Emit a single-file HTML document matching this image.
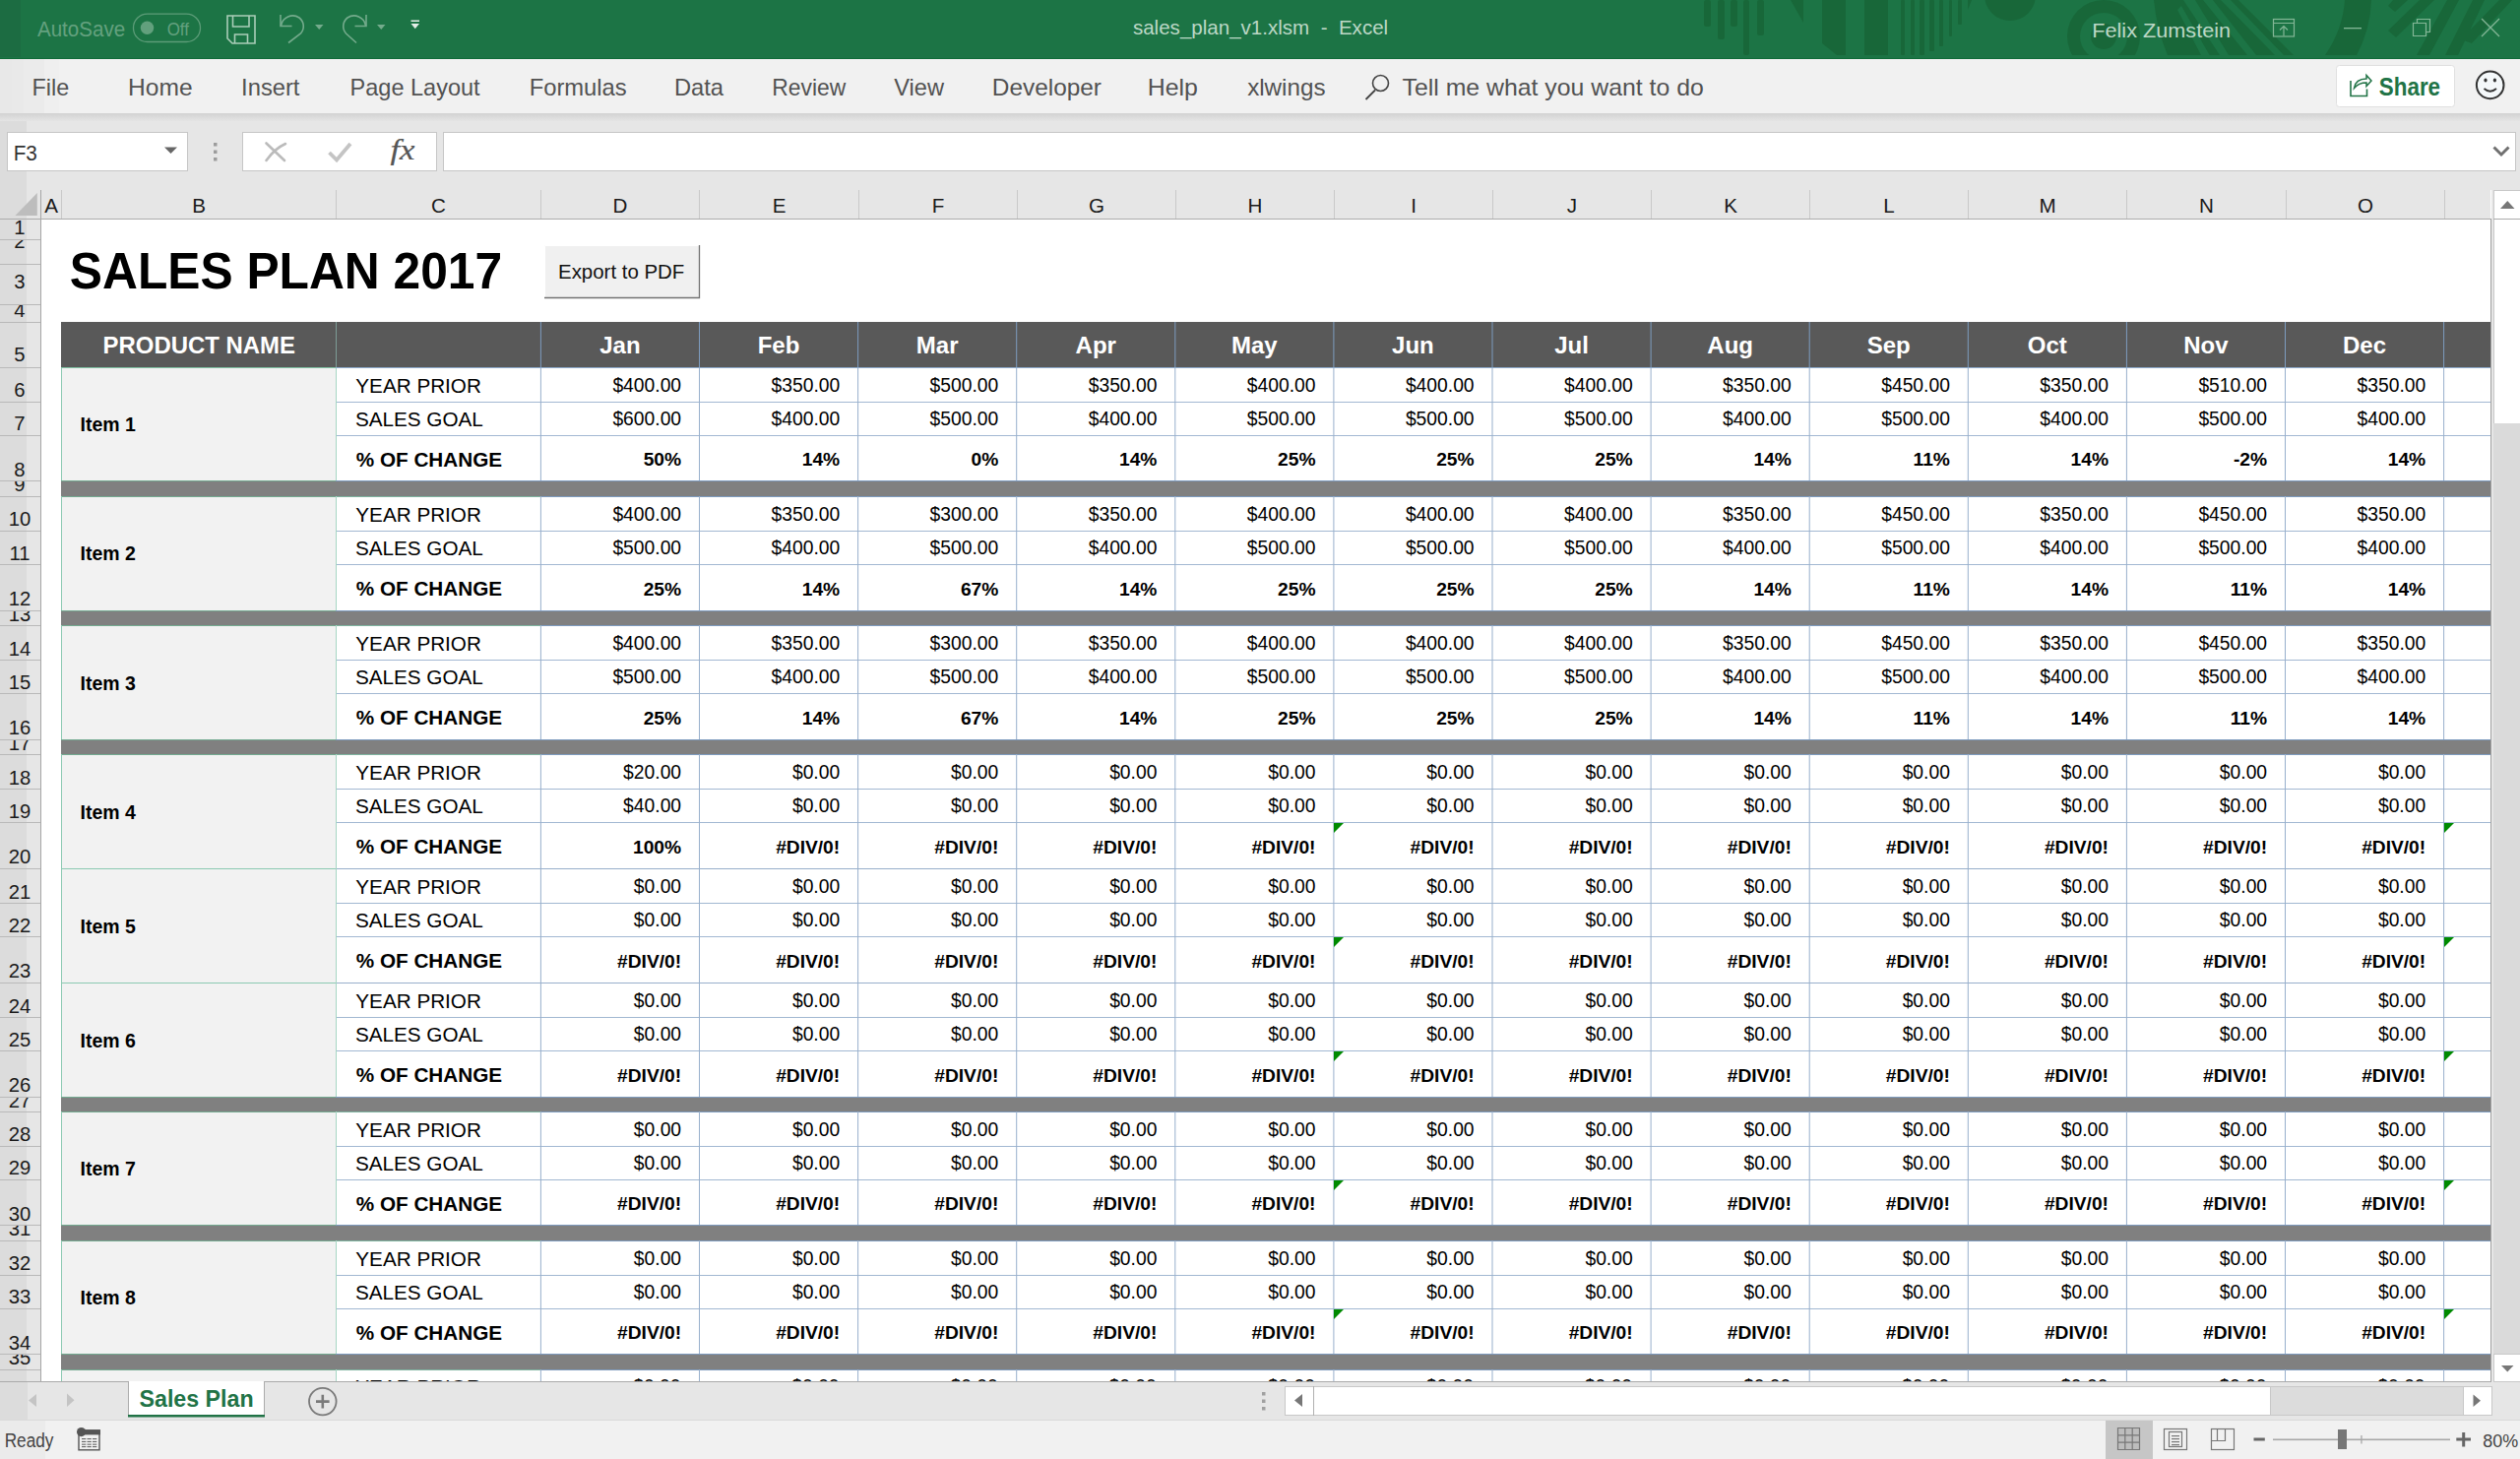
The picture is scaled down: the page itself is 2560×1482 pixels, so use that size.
<!DOCTYPE html>
<html><head><meta charset="utf-8"><title>sales_plan_v1.xlsm - Excel</title>
<style>html,body{margin:0;padding:0;width:2560px;height:1482px;overflow:hidden;background:#fff;font-family:"Liberation Sans",sans-serif}
svg text{white-space:pre}</style></head><body>
<svg width="2560" height="1482" viewBox="0 0 2560 1482" style="display:block"><rect x="0" y="0" width="2560" height="60" fill="#1C7445" />
<rect x="0" y="0" width="21" height="58" fill="#1C6C42" />
<rect x="0" y="59" width="2560" height="1" fill="#0F6A38" />
<g fill="#186739" clip-path="url(#tbclip)"><rect x="1731" y="0" width="7" height="27" rx="2"/><rect x="1745" y="0" width="7" height="40" rx="2"/><rect x="1758" y="0" width="7" height="27" rx="2"/><rect x="1771" y="0" width="6" height="56" rx="2"/><rect x="1785" y="0" width="7" height="36" rx="2"/><path d="M1819 0 L1832 0 L1832 23 Z"/><path d="M1851 0 L1875 0 L1875 56 L1866 56 L1851 44 Z"/><rect x="1894" y="0" width="24" height="56" rx="0"/><rect x="1931" y="0" width="4" height="56" rx="1"/><rect x="1941" y="0" width="4" height="56" rx="1"/><rect x="1950" y="0" width="5" height="56" rx="1"/><rect x="1960" y="0" width="5" height="52" rx="1"/><rect x="1970" y="0" width="4" height="47" rx="1"/><rect x="1980" y="0" width="3" height="37" rx="1"/><rect x="1989" y="0" width="4" height="25" rx="1"/><path d="M1999 0 L2003 0 L1999 10 Z"/><circle cx="2042" cy="-5" r="26"/><circle cx="2137" cy="37" r="37"/><circle cx="2137" cy="37" r="24" fill="#1C7445"/><circle cx="2137" cy="37" r="13"/><path d="M2188 0 L2409 0 Q2408 30 2394 56 L2202 56 Q2191 30 2188 0 Z"/><path fill="#1C7445" d="M2274 0 L2382 0 Q2380 30 2362 56 L2330 56 Z M2256 0 L2266 0 L2320 56 L2311 56 Z M2238 0 L2248 0 L2292 56 L2283 56 Z M2218 0 L2230 0 L2264 56 L2255 56 Z M2212 10 L2216 6 L2244.6 56 L2236 56 Z"/><path d="M2431 0 L2446 0 L2433 12 L2426 6 Z M2458 0 L2473 0 L2434 38 L2426 31 Z M2486 0 L2498 0 L2468 56 L2455 56 Z M2512 0 L2524 0 L2497 56 L2484 56 Z M2539 0 L2552 0 L2511 44 L2500 40 Z"/></g>
<text x="37.96" y="37.00" font-family="Liberation Sans" font-size="22" font-weight="normal" fill="#64A17F" textLength="89.15" lengthAdjust="spacingAndGlyphs" >AutoSave</text>
<rect x="135.5" y="14.2" width="68" height="28.3" rx="14.1" fill="none" stroke="#5C9C78" stroke-width="1.3"/>
<circle cx="149.5" cy="28.3" r="6.7" fill="#62A07D"/>
<text x="169.71" y="35.80" font-family="Liberation Sans" font-size="19" font-weight="normal" fill="#64A17F" textLength="22.27" lengthAdjust="spacingAndGlyphs" >Off</text>
<path d="M231 16 L259 16 L259 44 L236 44 L231 39 Z" fill="none" stroke="#AACDB8" stroke-width="1.6"/>
<path d="M236.5 16 L236.5 27 L253 27 L253 16" fill="none" stroke="#AACDB8" stroke-width="1.6"/>
<path d="M238.5 44 L238.5 35 L251.5 35 L251.5 44" fill="none" stroke="#AACDB8" stroke-width="1.6"/>
<path d="M285 15 L285 26.5 L296.5 26.5" fill="none" stroke="#74AB8C" stroke-width="1.6"/>
<path d="M285.5 26 A12 12 0 0 1 304 18 A11 11 0 0 1 305.5 34 L293 43.5" fill="none" stroke="#74AB8C" stroke-width="1.6"/>
<path d="M320 25 L328.5 25 L324.25 30 Z" fill="#74AB8C"/>
<path d="M372 15 L372 26.5 L360.5 26.5" fill="none" stroke="#74AB8C" stroke-width="1.6"/>
<path d="M371.5 26 A12 12 0 0 0 353 18 A11 11 0 0 0 351.5 34 L362 43.5" fill="none" stroke="#74AB8C" stroke-width="1.6"/>
<path d="M383 25 L391.5 25 L387.25 30 Z" fill="#74AB8C"/>
<rect x="417.5" y="20.5" width="8.5" height="1.5" fill="#E3EEE7"/>
<path d="M417.5 24 L426 24 L421.75 29.2 Z" fill="#E3EEE7"/>
<text x="1150.93" y="35.40" font-family="Liberation Sans" font-size="21" font-weight="normal" fill="#BCD8C6" textLength="259.25" lengthAdjust="spacingAndGlyphs" >sales_plan_v1.xlsm  -  Excel</text>
<text x="2125.22" y="38.00" font-family="Liberation Sans" font-size="21" font-weight="normal" fill="#BCD8C6" textLength="140.88" lengthAdjust="spacingAndGlyphs" >Felix Zumstein</text>
<rect x="2309.5" y="19.5" width="21" height="17.5" fill="none" stroke="#84B797" stroke-width="1.2"/>
<path d="M2309.5 23.5 L2330.5 23.5 M2320 36.5 L2320 27 M2316 30.5 L2320 26.5 L2324 30.5" fill="none" stroke="#84B797" stroke-width="1.2"/>
<rect x="2381" y="28" width="18" height="1.3" fill="#84B797"/>
<path d="M2451.5 23.5 L2464.5 23.5 L2464.5 36.5 L2451.5 36.5 Z M2455.5 23.5 L2455.5 19.5 L2468.5 19.5 L2468.5 32.5 L2464.5 32.5" fill="none" stroke="#84B797" stroke-width="1.2"/>
<path d="M2521 19 L2539 37 M2539 19 L2521 37" fill="none" stroke="#84B797" stroke-width="1.3"/>
<rect x="0" y="60" width="2560" height="55" fill="#F1F1F1" />
<rect x="0" y="60" width="12" height="55" fill="#E8E8E8" />
<rect x="12" y="60" width="12" height="55" fill="#E9E9E9" />
<rect x="24" y="60" width="21" height="55" fill="#EBEBEB" />
<rect x="45" y="60" width="15" height="55" fill="#EFEFEF" />
<text x="32.48" y="96.60" font-family="Liberation Sans" font-size="24" font-weight="normal" fill="#525252" textLength="37.66" lengthAdjust="spacingAndGlyphs" >File</text>
<text x="130.09" y="96.60" font-family="Liberation Sans" font-size="24" font-weight="normal" fill="#525252" textLength="65.51" lengthAdjust="spacingAndGlyphs" >Home</text>
<text x="245.11" y="96.60" font-family="Liberation Sans" font-size="24" font-weight="normal" fill="#525252" textLength="59.36" lengthAdjust="spacingAndGlyphs" >Insert</text>
<text x="355.57" y="96.60" font-family="Liberation Sans" font-size="24" font-weight="normal" fill="#525252" textLength="132.00" lengthAdjust="spacingAndGlyphs" >Page Layout</text>
<text x="537.65" y="96.60" font-family="Liberation Sans" font-size="24" font-weight="normal" fill="#525252" textLength="99.11" lengthAdjust="spacingAndGlyphs" >Formulas</text>
<text x="684.96" y="96.60" font-family="Liberation Sans" font-size="24" font-weight="normal" fill="#525252" textLength="50.04" lengthAdjust="spacingAndGlyphs" >Data</text>
<text x="784.33" y="96.60" font-family="Liberation Sans" font-size="24" font-weight="normal" fill="#525252" textLength="74.92" lengthAdjust="spacingAndGlyphs" >Review</text>
<text x="908.30" y="96.60" font-family="Liberation Sans" font-size="24" font-weight="normal" fill="#525252" textLength="50.75" lengthAdjust="spacingAndGlyphs" >View</text>
<text x="1007.80" y="96.60" font-family="Liberation Sans" font-size="24" font-weight="normal" fill="#525252" textLength="111.21" lengthAdjust="spacingAndGlyphs" >Developer</text>
<text x="1165.76" y="96.60" font-family="Liberation Sans" font-size="24" font-weight="normal" fill="#525252" textLength="51.19" lengthAdjust="spacingAndGlyphs" >Help</text>
<text x="1267.13" y="96.60" font-family="Liberation Sans" font-size="24" font-weight="normal" fill="#525252" textLength="79.45" lengthAdjust="spacingAndGlyphs" >xlwings</text>
<text x="1424.55" y="96.60" font-family="Liberation Sans" font-size="24" font-weight="normal" fill="#525252" textLength="306.19" lengthAdjust="spacingAndGlyphs" >Tell me what you want to do</text>
<circle cx="1402.5" cy="84.5" r="8" fill="none" stroke="#444" stroke-width="1.6"/>
<path d="M1397 91.5 L1387.5 101" stroke="#444" stroke-width="1.8" fill="none"/>
<rect x="2373.5" y="66.5" width="120" height="42" rx="3" fill="#FFFFFF" stroke="#E0E0E0" stroke-width="1"/>
<path d="M2388 82 L2388 97.5 L2404.5 97.5 L2404.5 90.5" fill="none" stroke="#217346" stroke-width="1.6"/>
<path d="M2391.5 89.5 Q2393 80 2404 80 L2404 76.5 L2409 82 L2404 87.5 L2404 84 Q2396 84 2391.5 89.5 Z" fill="none" stroke="#217346" stroke-width="1.5"/>
<text x="2416.86" y="96.50" font-family="Liberation Sans" font-size="25" font-weight="bold" fill="#217346" textLength="62.21" lengthAdjust="spacingAndGlyphs" >Share</text>
<circle cx="2529.7" cy="86.4" r="13.8" fill="#F4F8FA" stroke="#333" stroke-width="2"/>
<ellipse cx="2525" cy="81.5" rx="1.6" ry="2.1" fill="#333"/><ellipse cx="2534.4" cy="81.5" rx="1.6" ry="2.1" fill="#333"/>
<path d="M2523.5 90 Q2529.7 95.5 2536 90" fill="none" stroke="#333" stroke-width="1.8"/>
<defs><linearGradient id="sh" x1="0" y1="0" x2="0" y2="1"><stop offset="0" stop-color="#D2D2D2"/><stop offset="1" stop-color="#E4E4E4"/></linearGradient><clipPath id="tbclip"><rect x="0" y="0" width="2560" height="56"/></clipPath></defs>
<rect x="0" y="115" width="2560" height="8" fill="url(#sh)" />
<rect x="0" y="123" width="2560" height="70" fill="#E6E6E6" />
<rect x="0" y="123" width="27" height="70" fill="#DCDCDC" />
<rect x="7.5" y="134.5" width="183" height="39" fill="#FFF" stroke="#C6C6C6"/>
<text x="13.70" y="162.60" font-family="Liberation Sans" font-size="22" font-weight="normal" fill="#333" textLength="24.21" lengthAdjust="spacingAndGlyphs" >F3</text>
<path d="M167 149.5 L180 149.5 L173.5 156 Z" fill="#666"/>
<rect x="217" y="145" width="3.5" height="3.5" fill="#9C9C9C" />
<rect x="217" y="152.5" width="3.5" height="3.5" fill="#9C9C9C" />
<rect x="217" y="160" width="3.5" height="3.5" fill="#9C9C9C" />
<rect x="246.5" y="134.5" width="197" height="39" fill="#FFF" stroke="#C6C6C6"/>
<path d="M270.5 145.5 L289 163 M290 146 Q279 151 270.5 163" stroke="#BBBBBB" stroke-width="2.6" stroke-linecap="round" fill="none"/>
<path d="M334.5 155 L342 162.5 L356 146" fill="none" stroke="#C4C4C4" stroke-width="3.8"/>
<text x="396.5" y="161.5" font-family="Liberation Serif" font-style="italic" font-size="29" fill="#555" stroke="#555" stroke-width="0.2" textLength="25" lengthAdjust="spacingAndGlyphs">fx</text>
<rect x="450.5" y="134.5" width="2105" height="39" fill="#FFF" stroke="#C6C6C6"/>
<path d="M2533.5 149.5 L2541 157 L2548.5 149.5" fill="none" stroke="#707070" stroke-width="3"/>
<rect x="0" y="193" width="2530" height="30" fill="#E6E6E6" />
<rect x="0" y="193" width="27" height="30" fill="#DCDCDC" />
<path d="M37.8 196 L37.8 219 L15.4 219 Z" fill="#BDBDBD"/>
<text x="52.00" y="215.80" font-family="Liberation Sans" font-size="20.6" font-weight="normal" fill="#1A1A1A" text-anchor="middle" >A</text>
<rect x="62" y="193" width="1" height="29" fill="#C9C9C9" />
<text x="202.00" y="215.80" font-family="Liberation Sans" font-size="20.6" font-weight="normal" fill="#1A1A1A" text-anchor="middle" >B</text>
<rect x="341" y="193" width="1" height="29" fill="#C9C9C9" />
<text x="445.50" y="215.80" font-family="Liberation Sans" font-size="20.6" font-weight="normal" fill="#1A1A1A" text-anchor="middle" >C</text>
<rect x="549" y="193" width="1" height="29" fill="#C9C9C9" />
<text x="630.00" y="215.80" font-family="Liberation Sans" font-size="20.6" font-weight="normal" fill="#1A1A1A" text-anchor="middle" >D</text>
<rect x="710" y="193" width="1" height="29" fill="#C9C9C9" />
<text x="791.50" y="215.80" font-family="Liberation Sans" font-size="20.6" font-weight="normal" fill="#1A1A1A" text-anchor="middle" >E</text>
<rect x="872" y="193" width="1" height="29" fill="#C9C9C9" />
<text x="953.00" y="215.80" font-family="Liberation Sans" font-size="20.6" font-weight="normal" fill="#1A1A1A" text-anchor="middle" >F</text>
<rect x="1033" y="193" width="1" height="29" fill="#C9C9C9" />
<text x="1114.00" y="215.80" font-family="Liberation Sans" font-size="20.6" font-weight="normal" fill="#1A1A1A" text-anchor="middle" >G</text>
<rect x="1194" y="193" width="1" height="29" fill="#C9C9C9" />
<text x="1275.00" y="215.80" font-family="Liberation Sans" font-size="20.6" font-weight="normal" fill="#1A1A1A" text-anchor="middle" >H</text>
<rect x="1355" y="193" width="1" height="29" fill="#C9C9C9" />
<text x="1436.00" y="215.80" font-family="Liberation Sans" font-size="20.6" font-weight="normal" fill="#1A1A1A" text-anchor="middle" >I</text>
<rect x="1516" y="193" width="1" height="29" fill="#C9C9C9" />
<text x="1597.00" y="215.80" font-family="Liberation Sans" font-size="20.6" font-weight="normal" fill="#1A1A1A" text-anchor="middle" >J</text>
<rect x="1677" y="193" width="1" height="29" fill="#C9C9C9" />
<text x="1758.00" y="215.80" font-family="Liberation Sans" font-size="20.6" font-weight="normal" fill="#1A1A1A" text-anchor="middle" >K</text>
<rect x="1838" y="193" width="1" height="29" fill="#C9C9C9" />
<text x="1919.00" y="215.80" font-family="Liberation Sans" font-size="20.6" font-weight="normal" fill="#1A1A1A" text-anchor="middle" >L</text>
<rect x="1999" y="193" width="1" height="29" fill="#C9C9C9" />
<text x="2080.00" y="215.80" font-family="Liberation Sans" font-size="20.6" font-weight="normal" fill="#1A1A1A" text-anchor="middle" >M</text>
<rect x="2160" y="193" width="1" height="29" fill="#C9C9C9" />
<text x="2241.50" y="215.80" font-family="Liberation Sans" font-size="20.6" font-weight="normal" fill="#1A1A1A" text-anchor="middle" >N</text>
<rect x="2322" y="193" width="1" height="29" fill="#C9C9C9" />
<text x="2403.00" y="215.80" font-family="Liberation Sans" font-size="20.6" font-weight="normal" fill="#1A1A1A" text-anchor="middle" >O</text>
<rect x="2483" y="193" width="1" height="29" fill="#C9C9C9" />
<rect x="41" y="193" width="1" height="1210" fill="#A6A6A6" />
<rect x="0" y="222" width="2530" height="1" fill="#ABABAB" />
<rect x="0" y="223" width="41" height="1180" fill="#E6E6E6" />
<rect x="0" y="223" width="27" height="1180" fill="#DCDCDC" />
<defs>
<clipPath id="rc1"><rect x="0" y="223" width="41" height="21"/></clipPath>
<clipPath id="rc2"><rect x="0" y="244" width="41" height="25"/></clipPath>
<clipPath id="rc3"><rect x="0" y="269" width="41" height="41"/></clipPath>
<clipPath id="rc4"><rect x="0" y="310" width="41" height="18"/></clipPath>
<clipPath id="rc5"><rect x="0" y="328" width="41" height="46"/></clipPath>
<clipPath id="rc6"><rect x="0" y="374" width="41" height="35"/></clipPath>
<clipPath id="rc7"><rect x="0" y="409" width="41" height="34"/></clipPath>
<clipPath id="rc8"><rect x="0" y="443" width="41" height="46"/></clipPath>
<clipPath id="rc9"><rect x="0" y="489" width="41" height="16"/></clipPath>
<clipPath id="rc10"><rect x="0" y="505" width="41" height="35"/></clipPath>
<clipPath id="rc11"><rect x="0" y="540" width="41" height="34"/></clipPath>
<clipPath id="rc12"><rect x="0" y="574" width="41" height="47"/></clipPath>
<clipPath id="rc13"><rect x="0" y="621" width="41" height="15"/></clipPath>
<clipPath id="rc14"><rect x="0" y="636" width="41" height="35"/></clipPath>
<clipPath id="rc15"><rect x="0" y="671" width="41" height="34"/></clipPath>
<clipPath id="rc16"><rect x="0" y="705" width="41" height="47"/></clipPath>
<clipPath id="rc17"><rect x="0" y="752" width="41" height="15"/></clipPath>
<clipPath id="rc18"><rect x="0" y="767" width="41" height="35"/></clipPath>
<clipPath id="rc19"><rect x="0" y="802" width="41" height="34"/></clipPath>
<clipPath id="rc20"><rect x="0" y="836" width="41" height="47"/></clipPath>
<clipPath id="rc21"><rect x="0" y="883" width="41" height="35"/></clipPath>
<clipPath id="rc22"><rect x="0" y="918" width="41" height="34"/></clipPath>
<clipPath id="rc23"><rect x="0" y="952" width="41" height="47"/></clipPath>
<clipPath id="rc24"><rect x="0" y="999" width="41" height="35"/></clipPath>
<clipPath id="rc25"><rect x="0" y="1034" width="41" height="34"/></clipPath>
<clipPath id="rc26"><rect x="0" y="1068" width="41" height="47"/></clipPath>
<clipPath id="rc27"><rect x="0" y="1115" width="41" height="15"/></clipPath>
<clipPath id="rc28"><rect x="0" y="1130" width="41" height="35"/></clipPath>
<clipPath id="rc29"><rect x="0" y="1165" width="41" height="34"/></clipPath>
<clipPath id="rc30"><rect x="0" y="1199" width="41" height="46"/></clipPath>
<clipPath id="rc31"><rect x="0" y="1245" width="41" height="16"/></clipPath>
<clipPath id="rc32"><rect x="0" y="1261" width="41" height="35"/></clipPath>
<clipPath id="rc33"><rect x="0" y="1296" width="41" height="34"/></clipPath>
<clipPath id="rc34"><rect x="0" y="1330" width="41" height="46"/></clipPath>
<clipPath id="rc35"><rect x="0" y="1376" width="41" height="16"/></clipPath>
<clipPath id="rc36"><rect x="0" y="1392" width="41" height="35"/></clipPath>
<clipPath id="rc37"><rect x="0" y="1427" width="41" height="34"/></clipPath>
<clipPath id="rc38"><rect x="0" y="1461" width="41" height="47"/></clipPath>
<clipPath id="rc39"><rect x="0" y="1508" width="41" height="15"/></clipPath>
</defs>
<rect x="0" y="243" width="41" height="1" fill="#B9B9B9" />
<g clip-path="url(#rc1)">
<text x="20.00" y="238.30" font-family="Liberation Sans" font-size="20.3" font-weight="normal" fill="#1A1A1A" text-anchor="middle" >1</text>
</g>
<rect x="0" y="268" width="41" height="1" fill="#B9B9B9" />
<g clip-path="url(#rc2)">
<text x="20.00" y="251.70" font-family="Liberation Sans" font-size="20.3" font-weight="normal" fill="#1A1A1A" text-anchor="middle" >2</text>
</g>
<rect x="0" y="309" width="41" height="1" fill="#B9B9B9" />
<g clip-path="url(#rc3)">
<text x="20.00" y="292.90" font-family="Liberation Sans" font-size="20.3" font-weight="normal" fill="#1A1A1A" text-anchor="middle" >3</text>
</g>
<rect x="0" y="327" width="41" height="1" fill="#B9B9B9" />
<g clip-path="url(#rc4)">
<text x="20.00" y="322.10" font-family="Liberation Sans" font-size="20.3" font-weight="normal" fill="#1A1A1A" text-anchor="middle" >4</text>
</g>
<rect x="0" y="373" width="41" height="1" fill="#B9B9B9" />
<g clip-path="url(#rc5)">
<text x="20.00" y="366.90" font-family="Liberation Sans" font-size="20.3" font-weight="normal" fill="#1A1A1A" text-anchor="middle" >5</text>
</g>
<rect x="0" y="408" width="41" height="1" fill="#B9B9B9" />
<g clip-path="url(#rc6)">
<text x="20.00" y="403.20" font-family="Liberation Sans" font-size="20.3" font-weight="normal" fill="#1A1A1A" text-anchor="middle" >6</text>
</g>
<rect x="0" y="442" width="41" height="1" fill="#B9B9B9" />
<g clip-path="url(#rc7)">
<text x="20.00" y="437.40" font-family="Liberation Sans" font-size="20.3" font-weight="normal" fill="#1A1A1A" text-anchor="middle" >7</text>
</g>
<rect x="0" y="488" width="41" height="1" fill="#B9B9B9" />
<g clip-path="url(#rc8)">
<text x="20.00" y="483.90" font-family="Liberation Sans" font-size="20.3" font-weight="normal" fill="#1A1A1A" text-anchor="middle" >8</text>
</g>
<rect x="0" y="504" width="41" height="1" fill="#B9B9B9" />
<g clip-path="url(#rc9)">
<text x="20.00" y="499.40" font-family="Liberation Sans" font-size="20.3" font-weight="normal" fill="#1A1A1A" text-anchor="middle" >9</text>
</g>
<rect x="0" y="539" width="41" height="1" fill="#B9B9B9" />
<g clip-path="url(#rc10)">
<text x="20.00" y="534.40" font-family="Liberation Sans" font-size="20.3" font-weight="normal" fill="#1A1A1A" text-anchor="middle" >10</text>
</g>
<rect x="0" y="573" width="41" height="1" fill="#B9B9B9" />
<g clip-path="url(#rc11)">
<text x="20.00" y="568.60" font-family="Liberation Sans" font-size="20.3" font-weight="normal" fill="#1A1A1A" text-anchor="middle" >11</text>
</g>
<rect x="0" y="620" width="41" height="1" fill="#B9B9B9" />
<g clip-path="url(#rc12)">
<text x="20.00" y="615.10" font-family="Liberation Sans" font-size="20.3" font-weight="normal" fill="#1A1A1A" text-anchor="middle" >12</text>
</g>
<rect x="0" y="635" width="41" height="1" fill="#B9B9B9" />
<g clip-path="url(#rc13)">
<text x="20.00" y="630.60" font-family="Liberation Sans" font-size="20.3" font-weight="normal" fill="#1A1A1A" text-anchor="middle" >13</text>
</g>
<rect x="0" y="670" width="41" height="1" fill="#B9B9B9" />
<g clip-path="url(#rc14)">
<text x="20.00" y="665.60" font-family="Liberation Sans" font-size="20.3" font-weight="normal" fill="#1A1A1A" text-anchor="middle" >14</text>
</g>
<rect x="0" y="704" width="41" height="1" fill="#B9B9B9" />
<g clip-path="url(#rc15)">
<text x="20.00" y="699.80" font-family="Liberation Sans" font-size="20.3" font-weight="normal" fill="#1A1A1A" text-anchor="middle" >15</text>
</g>
<rect x="0" y="751" width="41" height="1" fill="#B9B9B9" />
<g clip-path="url(#rc16)">
<text x="20.00" y="746.30" font-family="Liberation Sans" font-size="20.3" font-weight="normal" fill="#1A1A1A" text-anchor="middle" >16</text>
</g>
<rect x="0" y="766" width="41" height="1" fill="#B9B9B9" />
<g clip-path="url(#rc17)">
<text x="20.00" y="761.80" font-family="Liberation Sans" font-size="20.3" font-weight="normal" fill="#1A1A1A" text-anchor="middle" >17</text>
</g>
<rect x="0" y="801" width="41" height="1" fill="#B9B9B9" />
<g clip-path="url(#rc18)">
<text x="20.00" y="796.70" font-family="Liberation Sans" font-size="20.3" font-weight="normal" fill="#1A1A1A" text-anchor="middle" >18</text>
</g>
<rect x="0" y="835" width="41" height="1" fill="#B9B9B9" />
<g clip-path="url(#rc19)">
<text x="20.00" y="830.90" font-family="Liberation Sans" font-size="20.3" font-weight="normal" fill="#1A1A1A" text-anchor="middle" >19</text>
</g>
<rect x="0" y="882" width="41" height="1" fill="#B9B9B9" />
<g clip-path="url(#rc20)">
<text x="20.00" y="877.40" font-family="Liberation Sans" font-size="20.3" font-weight="normal" fill="#1A1A1A" text-anchor="middle" >20</text>
</g>
<rect x="0" y="917" width="41" height="1" fill="#B9B9B9" />
<g clip-path="url(#rc21)">
<text x="20.00" y="912.60" font-family="Liberation Sans" font-size="20.3" font-weight="normal" fill="#1A1A1A" text-anchor="middle" >21</text>
</g>
<rect x="0" y="951" width="41" height="1" fill="#B9B9B9" />
<g clip-path="url(#rc22)">
<text x="20.00" y="946.80" font-family="Liberation Sans" font-size="20.3" font-weight="normal" fill="#1A1A1A" text-anchor="middle" >22</text>
</g>
<rect x="0" y="998" width="41" height="1" fill="#B9B9B9" />
<g clip-path="url(#rc23)">
<text x="20.00" y="993.30" font-family="Liberation Sans" font-size="20.3" font-weight="normal" fill="#1A1A1A" text-anchor="middle" >23</text>
</g>
<rect x="0" y="1033" width="41" height="1" fill="#B9B9B9" />
<g clip-path="url(#rc24)">
<text x="20.00" y="1028.50" font-family="Liberation Sans" font-size="20.3" font-weight="normal" fill="#1A1A1A" text-anchor="middle" >24</text>
</g>
<rect x="0" y="1067" width="41" height="1" fill="#B9B9B9" />
<g clip-path="url(#rc25)">
<text x="20.00" y="1062.70" font-family="Liberation Sans" font-size="20.3" font-weight="normal" fill="#1A1A1A" text-anchor="middle" >25</text>
</g>
<rect x="0" y="1114" width="41" height="1" fill="#B9B9B9" />
<g clip-path="url(#rc26)">
<text x="20.00" y="1109.20" font-family="Liberation Sans" font-size="20.3" font-weight="normal" fill="#1A1A1A" text-anchor="middle" >26</text>
</g>
<rect x="0" y="1129" width="41" height="1" fill="#B9B9B9" />
<g clip-path="url(#rc27)">
<text x="20.00" y="1124.70" font-family="Liberation Sans" font-size="20.3" font-weight="normal" fill="#1A1A1A" text-anchor="middle" >27</text>
</g>
<rect x="0" y="1164" width="41" height="1" fill="#B9B9B9" />
<g clip-path="url(#rc28)">
<text x="20.00" y="1159.20" font-family="Liberation Sans" font-size="20.3" font-weight="normal" fill="#1A1A1A" text-anchor="middle" >28</text>
</g>
<rect x="0" y="1198" width="41" height="1" fill="#B9B9B9" />
<g clip-path="url(#rc29)">
<text x="20.00" y="1193.40" font-family="Liberation Sans" font-size="20.3" font-weight="normal" fill="#1A1A1A" text-anchor="middle" >29</text>
</g>
<rect x="0" y="1244" width="41" height="1" fill="#B9B9B9" />
<g clip-path="url(#rc30)">
<text x="20.00" y="1239.90" font-family="Liberation Sans" font-size="20.3" font-weight="normal" fill="#1A1A1A" text-anchor="middle" >30</text>
</g>
<rect x="0" y="1260" width="41" height="1" fill="#B9B9B9" />
<g clip-path="url(#rc31)">
<text x="20.00" y="1255.40" font-family="Liberation Sans" font-size="20.3" font-weight="normal" fill="#1A1A1A" text-anchor="middle" >31</text>
</g>
<rect x="0" y="1295" width="41" height="1" fill="#B9B9B9" />
<g clip-path="url(#rc32)">
<text x="20.00" y="1290.20" font-family="Liberation Sans" font-size="20.3" font-weight="normal" fill="#1A1A1A" text-anchor="middle" >32</text>
</g>
<rect x="0" y="1329" width="41" height="1" fill="#B9B9B9" />
<g clip-path="url(#rc33)">
<text x="20.00" y="1324.40" font-family="Liberation Sans" font-size="20.3" font-weight="normal" fill="#1A1A1A" text-anchor="middle" >33</text>
</g>
<rect x="0" y="1375" width="41" height="1" fill="#B9B9B9" />
<g clip-path="url(#rc34)">
<text x="20.00" y="1370.90" font-family="Liberation Sans" font-size="20.3" font-weight="normal" fill="#1A1A1A" text-anchor="middle" >34</text>
</g>
<rect x="0" y="1391" width="41" height="1" fill="#B9B9B9" />
<g clip-path="url(#rc35)">
<text x="20.00" y="1386.40" font-family="Liberation Sans" font-size="20.3" font-weight="normal" fill="#1A1A1A" text-anchor="middle" >35</text>
</g>
<g clip-path="url(#rc36)">
<text x="20.00" y="1421.40" font-family="Liberation Sans" font-size="20.3" font-weight="normal" fill="#1A1A1A" text-anchor="middle" >36</text>
</g>
<g clip-path="url(#rc37)">
<text x="20.00" y="1455.60" font-family="Liberation Sans" font-size="20.3" font-weight="normal" fill="#1A1A1A" text-anchor="middle" >37</text>
</g>
<g clip-path="url(#rc38)">
<text x="20.00" y="1502.10" font-family="Liberation Sans" font-size="20.3" font-weight="normal" fill="#1A1A1A" text-anchor="middle" >38</text>
</g>
<g clip-path="url(#rc39)">
<text x="20.00" y="1517.60" font-family="Liberation Sans" font-size="20.3" font-weight="normal" fill="#1A1A1A" text-anchor="middle" >39</text>
</g>
<rect x="42" y="223" width="2488" height="1180" fill="#FFFFFF" />
<text x="70.87" y="293.20" font-family="Liberation Sans" font-size="52" font-weight="bold" fill="#000" textLength="439.22" lengthAdjust="spacingAndGlyphs" >SALES PLAN 2017</text>
<rect x="553" y="249" width="158" height="54" fill="#F0F0F0"/>
<path d="M553.5 302.5 L553.5 249.5 L710.5 249.5" fill="none" stroke="#FFFFFF" stroke-width="1"/>
<path d="M553 302.5 L710.5 302.5 L710.5 249" fill="none" stroke="#727272" stroke-width="1.3"/>
<text x="567.02" y="283.00" font-family="Liberation Sans" font-size="21" font-weight="normal" fill="#111" textLength="128.29" lengthAdjust="spacingAndGlyphs" >Export to PDF</text>
<rect x="62" y="327" width="2468" height="46" fill="#595959" />
<text x="104.60" y="359.20" font-family="Liberation Sans" font-size="24" font-weight="bold" fill="#FFFFFF" textLength="195.33" lengthAdjust="spacingAndGlyphs" >PRODUCT NAME</text>
<text x="629.95" y="359.20" font-family="Liberation Sans" font-size="24" font-weight="bold" fill="#FFFFFF" text-anchor="middle" >Jan</text>
<text x="791.05" y="359.20" font-family="Liberation Sans" font-size="24" font-weight="bold" fill="#FFFFFF" text-anchor="middle" >Feb</text>
<text x="952.15" y="359.20" font-family="Liberation Sans" font-size="24" font-weight="bold" fill="#FFFFFF" text-anchor="middle" >Mar</text>
<text x="1113.25" y="359.20" font-family="Liberation Sans" font-size="24" font-weight="bold" fill="#FFFFFF" text-anchor="middle" >Apr</text>
<text x="1274.35" y="359.20" font-family="Liberation Sans" font-size="24" font-weight="bold" fill="#FFFFFF" text-anchor="middle" >May</text>
<text x="1435.45" y="359.20" font-family="Liberation Sans" font-size="24" font-weight="bold" fill="#FFFFFF" text-anchor="middle" >Jun</text>
<text x="1596.55" y="359.20" font-family="Liberation Sans" font-size="24" font-weight="bold" fill="#FFFFFF" text-anchor="middle" >Jul</text>
<text x="1757.65" y="359.20" font-family="Liberation Sans" font-size="24" font-weight="bold" fill="#FFFFFF" text-anchor="middle" >Aug</text>
<text x="1918.75" y="359.20" font-family="Liberation Sans" font-size="24" font-weight="bold" fill="#FFFFFF" text-anchor="middle" >Sep</text>
<text x="2079.85" y="359.20" font-family="Liberation Sans" font-size="24" font-weight="bold" fill="#FFFFFF" text-anchor="middle" >Oct</text>
<text x="2240.95" y="359.20" font-family="Liberation Sans" font-size="24" font-weight="bold" fill="#FFFFFF" text-anchor="middle" >Nov</text>
<text x="2402.05" y="359.20" font-family="Liberation Sans" font-size="24" font-weight="bold" fill="#FFFFFF" text-anchor="middle" >Dec</text>
<rect x="341" y="327" width="1" height="46" fill="#7C9C96" />
<rect x="548.9" y="327" width="1" height="46" fill="#7D9CBF" />
<rect x="710" y="327" width="1" height="46" fill="#7D9CBF" />
<rect x="871.1" y="327" width="1" height="46" fill="#7D9CBF" />
<rect x="1032.2" y="327" width="1" height="46" fill="#7D9CBF" />
<rect x="1193.3" y="327" width="1" height="46" fill="#7D9CBF" />
<rect x="1354.4" y="327" width="1" height="46" fill="#7D9CBF" />
<rect x="1515.5" y="327" width="1" height="46" fill="#7D9CBF" />
<rect x="1676.6" y="327" width="1" height="46" fill="#7D9CBF" />
<rect x="1837.7" y="327" width="1" height="46" fill="#7D9CBF" />
<rect x="1998.8" y="327" width="1" height="46" fill="#7D9CBF" />
<rect x="2159.9" y="327" width="1" height="46" fill="#7D9CBF" />
<rect x="2321" y="327" width="1" height="46" fill="#7D9CBF" />
<rect x="2482.1" y="327" width="1" height="46" fill="#7D9CBF" />
<g clip-path="url(#gridclip)">
<defs><clipPath id="gridclip"><rect x="42" y="223" width="2488" height="1180"/></clipPath></defs>
<rect x="63" y="374" width="278" height="115" fill="#F2F2F2" />
<rect x="341" y="408" width="2189" height="1" fill="#A2B8D2" />
<rect x="341" y="442" width="2189" height="1" fill="#A2B8D2" />
<rect x="62" y="373" width="1" height="116" fill="#8CC9B2" />
<rect x="341" y="373" width="1" height="116" fill="#A6D6C4" />
<rect x="548.9" y="373" width="1" height="116" fill="#98B0CC" />
<rect x="710" y="373" width="1" height="116" fill="#98B0CC" />
<rect x="871.1" y="373" width="1" height="116" fill="#98B0CC" />
<rect x="1032.2" y="373" width="1" height="116" fill="#98B0CC" />
<rect x="1193.3" y="373" width="1" height="116" fill="#98B0CC" />
<rect x="1354.4" y="373" width="1" height="116" fill="#98B0CC" />
<rect x="1515.5" y="373" width="1" height="116" fill="#98B0CC" />
<rect x="1676.6" y="373" width="1" height="116" fill="#98B0CC" />
<rect x="1837.7" y="373" width="1" height="116" fill="#98B0CC" />
<rect x="1998.8" y="373" width="1" height="116" fill="#98B0CC" />
<rect x="2159.9" y="373" width="1" height="116" fill="#98B0CC" />
<rect x="2321" y="373" width="1" height="116" fill="#98B0CC" />
<rect x="2482.1" y="373" width="1" height="116" fill="#98B0CC" />
<rect x="62" y="373" width="279" height="1" fill="#7FC2A3" />
<rect x="341" y="373" width="2189" height="1" fill="#8DAACC" />
<rect x="62" y="489" width="2468" height="15" fill="#808080" />
<rect x="62" y="488" width="279" height="1" fill="#74AA91" />
<rect x="341" y="488" width="2189" height="1" fill="#7E9BBE" />
<rect x="62" y="504" width="279" height="1" fill="#74AA91" />
<rect x="341" y="504" width="208" height="1" fill="#7FB4A0" />
<rect x="549" y="504" width="1981" height="1" fill="#7E9BBE" />
<text x="81.50" y="438.20" font-family="Liberation Sans" font-size="19.5" font-weight="bold" fill="#000" text-anchor="start" >Item 1</text>
<text x="361.30" y="398.50" font-family="Liberation Sans" font-size="20.7" font-weight="normal" fill="#000" text-anchor="start" >YEAR PRIOR</text>
<text x="360.90" y="432.80" font-family="Liberation Sans" font-size="20.7" font-weight="normal" fill="#000" text-anchor="start" >SALES GOAL</text>
<text x="361.80" y="473.70" font-family="Liberation Sans" font-size="20.7" font-weight="bold" fill="#000" text-anchor="start" >% OF CHANGE</text>
<text x="692.10" y="397.60" font-family="Liberation Sans" font-size="19.3" font-weight="normal" fill="#000" text-anchor="end" >$400.00</text>
<text x="692.10" y="431.70" font-family="Liberation Sans" font-size="19.3" font-weight="normal" fill="#000" text-anchor="end" >$600.00</text>
<text x="692.10" y="473.40" font-family="Liberation Sans" font-size="19.2" font-weight="bold" fill="#000" text-anchor="end" >50%</text>
<text x="853.20" y="397.60" font-family="Liberation Sans" font-size="19.3" font-weight="normal" fill="#000" text-anchor="end" >$350.00</text>
<text x="853.20" y="431.70" font-family="Liberation Sans" font-size="19.3" font-weight="normal" fill="#000" text-anchor="end" >$400.00</text>
<text x="853.20" y="473.40" font-family="Liberation Sans" font-size="19.2" font-weight="bold" fill="#000" text-anchor="end" >14%</text>
<text x="1014.30" y="397.60" font-family="Liberation Sans" font-size="19.3" font-weight="normal" fill="#000" text-anchor="end" >$500.00</text>
<text x="1014.30" y="431.70" font-family="Liberation Sans" font-size="19.3" font-weight="normal" fill="#000" text-anchor="end" >$500.00</text>
<text x="1014.30" y="473.40" font-family="Liberation Sans" font-size="19.2" font-weight="bold" fill="#000" text-anchor="end" >0%</text>
<text x="1175.40" y="397.60" font-family="Liberation Sans" font-size="19.3" font-weight="normal" fill="#000" text-anchor="end" >$350.00</text>
<text x="1175.40" y="431.70" font-family="Liberation Sans" font-size="19.3" font-weight="normal" fill="#000" text-anchor="end" >$400.00</text>
<text x="1175.40" y="473.40" font-family="Liberation Sans" font-size="19.2" font-weight="bold" fill="#000" text-anchor="end" >14%</text>
<text x="1336.50" y="397.60" font-family="Liberation Sans" font-size="19.3" font-weight="normal" fill="#000" text-anchor="end" >$400.00</text>
<text x="1336.50" y="431.70" font-family="Liberation Sans" font-size="19.3" font-weight="normal" fill="#000" text-anchor="end" >$500.00</text>
<text x="1336.50" y="473.40" font-family="Liberation Sans" font-size="19.2" font-weight="bold" fill="#000" text-anchor="end" >25%</text>
<text x="1497.60" y="397.60" font-family="Liberation Sans" font-size="19.3" font-weight="normal" fill="#000" text-anchor="end" >$400.00</text>
<text x="1497.60" y="431.70" font-family="Liberation Sans" font-size="19.3" font-weight="normal" fill="#000" text-anchor="end" >$500.00</text>
<text x="1497.60" y="473.40" font-family="Liberation Sans" font-size="19.2" font-weight="bold" fill="#000" text-anchor="end" >25%</text>
<text x="1658.70" y="397.60" font-family="Liberation Sans" font-size="19.3" font-weight="normal" fill="#000" text-anchor="end" >$400.00</text>
<text x="1658.70" y="431.70" font-family="Liberation Sans" font-size="19.3" font-weight="normal" fill="#000" text-anchor="end" >$500.00</text>
<text x="1658.70" y="473.40" font-family="Liberation Sans" font-size="19.2" font-weight="bold" fill="#000" text-anchor="end" >25%</text>
<text x="1819.80" y="397.60" font-family="Liberation Sans" font-size="19.3" font-weight="normal" fill="#000" text-anchor="end" >$350.00</text>
<text x="1819.80" y="431.70" font-family="Liberation Sans" font-size="19.3" font-weight="normal" fill="#000" text-anchor="end" >$400.00</text>
<text x="1819.80" y="473.40" font-family="Liberation Sans" font-size="19.2" font-weight="bold" fill="#000" text-anchor="end" >14%</text>
<text x="1980.90" y="397.60" font-family="Liberation Sans" font-size="19.3" font-weight="normal" fill="#000" text-anchor="end" >$450.00</text>
<text x="1980.90" y="431.70" font-family="Liberation Sans" font-size="19.3" font-weight="normal" fill="#000" text-anchor="end" >$500.00</text>
<text x="1980.90" y="473.40" font-family="Liberation Sans" font-size="19.2" font-weight="bold" fill="#000" text-anchor="end" >11%</text>
<text x="2142.00" y="397.60" font-family="Liberation Sans" font-size="19.3" font-weight="normal" fill="#000" text-anchor="end" >$350.00</text>
<text x="2142.00" y="431.70" font-family="Liberation Sans" font-size="19.3" font-weight="normal" fill="#000" text-anchor="end" >$400.00</text>
<text x="2142.00" y="473.40" font-family="Liberation Sans" font-size="19.2" font-weight="bold" fill="#000" text-anchor="end" >14%</text>
<text x="2303.10" y="397.60" font-family="Liberation Sans" font-size="19.3" font-weight="normal" fill="#000" text-anchor="end" >$510.00</text>
<text x="2303.10" y="431.70" font-family="Liberation Sans" font-size="19.3" font-weight="normal" fill="#000" text-anchor="end" >$500.00</text>
<text x="2303.10" y="473.40" font-family="Liberation Sans" font-size="19.2" font-weight="bold" fill="#000" text-anchor="end" >-2%</text>
<text x="2464.20" y="397.60" font-family="Liberation Sans" font-size="19.3" font-weight="normal" fill="#000" text-anchor="end" >$350.00</text>
<text x="2464.20" y="431.70" font-family="Liberation Sans" font-size="19.3" font-weight="normal" fill="#000" text-anchor="end" >$400.00</text>
<text x="2464.20" y="473.40" font-family="Liberation Sans" font-size="19.2" font-weight="bold" fill="#000" text-anchor="end" >14%</text>
<rect x="63" y="505" width="278" height="116" fill="#F2F2F2" />
<rect x="341" y="539" width="2189" height="1" fill="#A2B8D2" />
<rect x="341" y="573" width="2189" height="1" fill="#A2B8D2" />
<rect x="62" y="504" width="1" height="117" fill="#8CC9B2" />
<rect x="341" y="504" width="1" height="117" fill="#A6D6C4" />
<rect x="548.9" y="504" width="1" height="117" fill="#98B0CC" />
<rect x="710" y="504" width="1" height="117" fill="#98B0CC" />
<rect x="871.1" y="504" width="1" height="117" fill="#98B0CC" />
<rect x="1032.2" y="504" width="1" height="117" fill="#98B0CC" />
<rect x="1193.3" y="504" width="1" height="117" fill="#98B0CC" />
<rect x="1354.4" y="504" width="1" height="117" fill="#98B0CC" />
<rect x="1515.5" y="504" width="1" height="117" fill="#98B0CC" />
<rect x="1676.6" y="504" width="1" height="117" fill="#98B0CC" />
<rect x="1837.7" y="504" width="1" height="117" fill="#98B0CC" />
<rect x="1998.8" y="504" width="1" height="117" fill="#98B0CC" />
<rect x="2159.9" y="504" width="1" height="117" fill="#98B0CC" />
<rect x="2321" y="504" width="1" height="117" fill="#98B0CC" />
<rect x="2482.1" y="504" width="1" height="117" fill="#98B0CC" />
<rect x="62" y="621" width="2468" height="14" fill="#808080" />
<rect x="62" y="620" width="279" height="1" fill="#74AA91" />
<rect x="341" y="620" width="2189" height="1" fill="#7E9BBE" />
<rect x="62" y="635" width="279" height="1" fill="#74AA91" />
<rect x="341" y="635" width="208" height="1" fill="#7FB4A0" />
<rect x="549" y="635" width="1981" height="1" fill="#7E9BBE" />
<text x="81.50" y="569.40" font-family="Liberation Sans" font-size="19.5" font-weight="bold" fill="#000" text-anchor="start" >Item 2</text>
<text x="361.30" y="529.70" font-family="Liberation Sans" font-size="20.7" font-weight="normal" fill="#000" text-anchor="start" >YEAR PRIOR</text>
<text x="360.90" y="564.00" font-family="Liberation Sans" font-size="20.7" font-weight="normal" fill="#000" text-anchor="start" >SALES GOAL</text>
<text x="361.80" y="604.90" font-family="Liberation Sans" font-size="20.7" font-weight="bold" fill="#000" text-anchor="start" >% OF CHANGE</text>
<text x="692.10" y="528.80" font-family="Liberation Sans" font-size="19.3" font-weight="normal" fill="#000" text-anchor="end" >$400.00</text>
<text x="692.10" y="562.90" font-family="Liberation Sans" font-size="19.3" font-weight="normal" fill="#000" text-anchor="end" >$500.00</text>
<text x="692.10" y="604.60" font-family="Liberation Sans" font-size="19.2" font-weight="bold" fill="#000" text-anchor="end" >25%</text>
<text x="853.20" y="528.80" font-family="Liberation Sans" font-size="19.3" font-weight="normal" fill="#000" text-anchor="end" >$350.00</text>
<text x="853.20" y="562.90" font-family="Liberation Sans" font-size="19.3" font-weight="normal" fill="#000" text-anchor="end" >$400.00</text>
<text x="853.20" y="604.60" font-family="Liberation Sans" font-size="19.2" font-weight="bold" fill="#000" text-anchor="end" >14%</text>
<text x="1014.30" y="528.80" font-family="Liberation Sans" font-size="19.3" font-weight="normal" fill="#000" text-anchor="end" >$300.00</text>
<text x="1014.30" y="562.90" font-family="Liberation Sans" font-size="19.3" font-weight="normal" fill="#000" text-anchor="end" >$500.00</text>
<text x="1014.30" y="604.60" font-family="Liberation Sans" font-size="19.2" font-weight="bold" fill="#000" text-anchor="end" >67%</text>
<text x="1175.40" y="528.80" font-family="Liberation Sans" font-size="19.3" font-weight="normal" fill="#000" text-anchor="end" >$350.00</text>
<text x="1175.40" y="562.90" font-family="Liberation Sans" font-size="19.3" font-weight="normal" fill="#000" text-anchor="end" >$400.00</text>
<text x="1175.40" y="604.60" font-family="Liberation Sans" font-size="19.2" font-weight="bold" fill="#000" text-anchor="end" >14%</text>
<text x="1336.50" y="528.80" font-family="Liberation Sans" font-size="19.3" font-weight="normal" fill="#000" text-anchor="end" >$400.00</text>
<text x="1336.50" y="562.90" font-family="Liberation Sans" font-size="19.3" font-weight="normal" fill="#000" text-anchor="end" >$500.00</text>
<text x="1336.50" y="604.60" font-family="Liberation Sans" font-size="19.2" font-weight="bold" fill="#000" text-anchor="end" >25%</text>
<text x="1497.60" y="528.80" font-family="Liberation Sans" font-size="19.3" font-weight="normal" fill="#000" text-anchor="end" >$400.00</text>
<text x="1497.60" y="562.90" font-family="Liberation Sans" font-size="19.3" font-weight="normal" fill="#000" text-anchor="end" >$500.00</text>
<text x="1497.60" y="604.60" font-family="Liberation Sans" font-size="19.2" font-weight="bold" fill="#000" text-anchor="end" >25%</text>
<text x="1658.70" y="528.80" font-family="Liberation Sans" font-size="19.3" font-weight="normal" fill="#000" text-anchor="end" >$400.00</text>
<text x="1658.70" y="562.90" font-family="Liberation Sans" font-size="19.3" font-weight="normal" fill="#000" text-anchor="end" >$500.00</text>
<text x="1658.70" y="604.60" font-family="Liberation Sans" font-size="19.2" font-weight="bold" fill="#000" text-anchor="end" >25%</text>
<text x="1819.80" y="528.80" font-family="Liberation Sans" font-size="19.3" font-weight="normal" fill="#000" text-anchor="end" >$350.00</text>
<text x="1819.80" y="562.90" font-family="Liberation Sans" font-size="19.3" font-weight="normal" fill="#000" text-anchor="end" >$400.00</text>
<text x="1819.80" y="604.60" font-family="Liberation Sans" font-size="19.2" font-weight="bold" fill="#000" text-anchor="end" >14%</text>
<text x="1980.90" y="528.80" font-family="Liberation Sans" font-size="19.3" font-weight="normal" fill="#000" text-anchor="end" >$450.00</text>
<text x="1980.90" y="562.90" font-family="Liberation Sans" font-size="19.3" font-weight="normal" fill="#000" text-anchor="end" >$500.00</text>
<text x="1980.90" y="604.60" font-family="Liberation Sans" font-size="19.2" font-weight="bold" fill="#000" text-anchor="end" >11%</text>
<text x="2142.00" y="528.80" font-family="Liberation Sans" font-size="19.3" font-weight="normal" fill="#000" text-anchor="end" >$350.00</text>
<text x="2142.00" y="562.90" font-family="Liberation Sans" font-size="19.3" font-weight="normal" fill="#000" text-anchor="end" >$400.00</text>
<text x="2142.00" y="604.60" font-family="Liberation Sans" font-size="19.2" font-weight="bold" fill="#000" text-anchor="end" >14%</text>
<text x="2303.10" y="528.80" font-family="Liberation Sans" font-size="19.3" font-weight="normal" fill="#000" text-anchor="end" >$450.00</text>
<text x="2303.10" y="562.90" font-family="Liberation Sans" font-size="19.3" font-weight="normal" fill="#000" text-anchor="end" >$500.00</text>
<text x="2303.10" y="604.60" font-family="Liberation Sans" font-size="19.2" font-weight="bold" fill="#000" text-anchor="end" >11%</text>
<text x="2464.20" y="528.80" font-family="Liberation Sans" font-size="19.3" font-weight="normal" fill="#000" text-anchor="end" >$350.00</text>
<text x="2464.20" y="562.90" font-family="Liberation Sans" font-size="19.3" font-weight="normal" fill="#000" text-anchor="end" >$400.00</text>
<text x="2464.20" y="604.60" font-family="Liberation Sans" font-size="19.2" font-weight="bold" fill="#000" text-anchor="end" >14%</text>
<rect x="63" y="636" width="278" height="116" fill="#F2F2F2" />
<rect x="341" y="670" width="2189" height="1" fill="#A2B8D2" />
<rect x="341" y="704" width="2189" height="1" fill="#A2B8D2" />
<rect x="62" y="635" width="1" height="117" fill="#8CC9B2" />
<rect x="341" y="635" width="1" height="117" fill="#A6D6C4" />
<rect x="548.9" y="635" width="1" height="117" fill="#98B0CC" />
<rect x="710" y="635" width="1" height="117" fill="#98B0CC" />
<rect x="871.1" y="635" width="1" height="117" fill="#98B0CC" />
<rect x="1032.2" y="635" width="1" height="117" fill="#98B0CC" />
<rect x="1193.3" y="635" width="1" height="117" fill="#98B0CC" />
<rect x="1354.4" y="635" width="1" height="117" fill="#98B0CC" />
<rect x="1515.5" y="635" width="1" height="117" fill="#98B0CC" />
<rect x="1676.6" y="635" width="1" height="117" fill="#98B0CC" />
<rect x="1837.7" y="635" width="1" height="117" fill="#98B0CC" />
<rect x="1998.8" y="635" width="1" height="117" fill="#98B0CC" />
<rect x="2159.9" y="635" width="1" height="117" fill="#98B0CC" />
<rect x="2321" y="635" width="1" height="117" fill="#98B0CC" />
<rect x="2482.1" y="635" width="1" height="117" fill="#98B0CC" />
<rect x="62" y="752" width="2468" height="14" fill="#808080" />
<rect x="62" y="751" width="279" height="1" fill="#74AA91" />
<rect x="341" y="751" width="2189" height="1" fill="#7E9BBE" />
<rect x="62" y="766" width="279" height="1" fill="#74AA91" />
<rect x="341" y="766" width="208" height="1" fill="#7FB4A0" />
<rect x="549" y="766" width="1981" height="1" fill="#7E9BBE" />
<text x="81.50" y="700.60" font-family="Liberation Sans" font-size="19.5" font-weight="bold" fill="#000" text-anchor="start" >Item 3</text>
<text x="361.30" y="660.90" font-family="Liberation Sans" font-size="20.7" font-weight="normal" fill="#000" text-anchor="start" >YEAR PRIOR</text>
<text x="360.90" y="695.20" font-family="Liberation Sans" font-size="20.7" font-weight="normal" fill="#000" text-anchor="start" >SALES GOAL</text>
<text x="361.80" y="736.10" font-family="Liberation Sans" font-size="20.7" font-weight="bold" fill="#000" text-anchor="start" >% OF CHANGE</text>
<text x="692.10" y="660.00" font-family="Liberation Sans" font-size="19.3" font-weight="normal" fill="#000" text-anchor="end" >$400.00</text>
<text x="692.10" y="694.10" font-family="Liberation Sans" font-size="19.3" font-weight="normal" fill="#000" text-anchor="end" >$500.00</text>
<text x="692.10" y="735.80" font-family="Liberation Sans" font-size="19.2" font-weight="bold" fill="#000" text-anchor="end" >25%</text>
<text x="853.20" y="660.00" font-family="Liberation Sans" font-size="19.3" font-weight="normal" fill="#000" text-anchor="end" >$350.00</text>
<text x="853.20" y="694.10" font-family="Liberation Sans" font-size="19.3" font-weight="normal" fill="#000" text-anchor="end" >$400.00</text>
<text x="853.20" y="735.80" font-family="Liberation Sans" font-size="19.2" font-weight="bold" fill="#000" text-anchor="end" >14%</text>
<text x="1014.30" y="660.00" font-family="Liberation Sans" font-size="19.3" font-weight="normal" fill="#000" text-anchor="end" >$300.00</text>
<text x="1014.30" y="694.10" font-family="Liberation Sans" font-size="19.3" font-weight="normal" fill="#000" text-anchor="end" >$500.00</text>
<text x="1014.30" y="735.80" font-family="Liberation Sans" font-size="19.2" font-weight="bold" fill="#000" text-anchor="end" >67%</text>
<text x="1175.40" y="660.00" font-family="Liberation Sans" font-size="19.3" font-weight="normal" fill="#000" text-anchor="end" >$350.00</text>
<text x="1175.40" y="694.10" font-family="Liberation Sans" font-size="19.3" font-weight="normal" fill="#000" text-anchor="end" >$400.00</text>
<text x="1175.40" y="735.80" font-family="Liberation Sans" font-size="19.2" font-weight="bold" fill="#000" text-anchor="end" >14%</text>
<text x="1336.50" y="660.00" font-family="Liberation Sans" font-size="19.3" font-weight="normal" fill="#000" text-anchor="end" >$400.00</text>
<text x="1336.50" y="694.10" font-family="Liberation Sans" font-size="19.3" font-weight="normal" fill="#000" text-anchor="end" >$500.00</text>
<text x="1336.50" y="735.80" font-family="Liberation Sans" font-size="19.2" font-weight="bold" fill="#000" text-anchor="end" >25%</text>
<text x="1497.60" y="660.00" font-family="Liberation Sans" font-size="19.3" font-weight="normal" fill="#000" text-anchor="end" >$400.00</text>
<text x="1497.60" y="694.10" font-family="Liberation Sans" font-size="19.3" font-weight="normal" fill="#000" text-anchor="end" >$500.00</text>
<text x="1497.60" y="735.80" font-family="Liberation Sans" font-size="19.2" font-weight="bold" fill="#000" text-anchor="end" >25%</text>
<text x="1658.70" y="660.00" font-family="Liberation Sans" font-size="19.3" font-weight="normal" fill="#000" text-anchor="end" >$400.00</text>
<text x="1658.70" y="694.10" font-family="Liberation Sans" font-size="19.3" font-weight="normal" fill="#000" text-anchor="end" >$500.00</text>
<text x="1658.70" y="735.80" font-family="Liberation Sans" font-size="19.2" font-weight="bold" fill="#000" text-anchor="end" >25%</text>
<text x="1819.80" y="660.00" font-family="Liberation Sans" font-size="19.3" font-weight="normal" fill="#000" text-anchor="end" >$350.00</text>
<text x="1819.80" y="694.10" font-family="Liberation Sans" font-size="19.3" font-weight="normal" fill="#000" text-anchor="end" >$400.00</text>
<text x="1819.80" y="735.80" font-family="Liberation Sans" font-size="19.2" font-weight="bold" fill="#000" text-anchor="end" >14%</text>
<text x="1980.90" y="660.00" font-family="Liberation Sans" font-size="19.3" font-weight="normal" fill="#000" text-anchor="end" >$450.00</text>
<text x="1980.90" y="694.10" font-family="Liberation Sans" font-size="19.3" font-weight="normal" fill="#000" text-anchor="end" >$500.00</text>
<text x="1980.90" y="735.80" font-family="Liberation Sans" font-size="19.2" font-weight="bold" fill="#000" text-anchor="end" >11%</text>
<text x="2142.00" y="660.00" font-family="Liberation Sans" font-size="19.3" font-weight="normal" fill="#000" text-anchor="end" >$350.00</text>
<text x="2142.00" y="694.10" font-family="Liberation Sans" font-size="19.3" font-weight="normal" fill="#000" text-anchor="end" >$400.00</text>
<text x="2142.00" y="735.80" font-family="Liberation Sans" font-size="19.2" font-weight="bold" fill="#000" text-anchor="end" >14%</text>
<text x="2303.10" y="660.00" font-family="Liberation Sans" font-size="19.3" font-weight="normal" fill="#000" text-anchor="end" >$450.00</text>
<text x="2303.10" y="694.10" font-family="Liberation Sans" font-size="19.3" font-weight="normal" fill="#000" text-anchor="end" >$500.00</text>
<text x="2303.10" y="735.80" font-family="Liberation Sans" font-size="19.2" font-weight="bold" fill="#000" text-anchor="end" >11%</text>
<text x="2464.20" y="660.00" font-family="Liberation Sans" font-size="19.3" font-weight="normal" fill="#000" text-anchor="end" >$350.00</text>
<text x="2464.20" y="694.10" font-family="Liberation Sans" font-size="19.3" font-weight="normal" fill="#000" text-anchor="end" >$400.00</text>
<text x="2464.20" y="735.80" font-family="Liberation Sans" font-size="19.2" font-weight="bold" fill="#000" text-anchor="end" >14%</text>
<rect x="63" y="767" width="278" height="116" fill="#F2F2F2" />
<rect x="341" y="801" width="2189" height="1" fill="#A2B8D2" />
<rect x="341" y="835" width="2189" height="1" fill="#A2B8D2" />
<rect x="62" y="766" width="1" height="117" fill="#8CC9B2" />
<rect x="341" y="766" width="1" height="117" fill="#A6D6C4" />
<rect x="548.9" y="766" width="1" height="117" fill="#98B0CC" />
<rect x="710" y="766" width="1" height="117" fill="#98B0CC" />
<rect x="871.1" y="766" width="1" height="117" fill="#98B0CC" />
<rect x="1032.2" y="766" width="1" height="117" fill="#98B0CC" />
<rect x="1193.3" y="766" width="1" height="117" fill="#98B0CC" />
<rect x="1354.4" y="766" width="1" height="117" fill="#98B0CC" />
<rect x="1515.5" y="766" width="1" height="117" fill="#98B0CC" />
<rect x="1676.6" y="766" width="1" height="117" fill="#98B0CC" />
<rect x="1837.7" y="766" width="1" height="117" fill="#98B0CC" />
<rect x="1998.8" y="766" width="1" height="117" fill="#98B0CC" />
<rect x="2159.9" y="766" width="1" height="117" fill="#98B0CC" />
<rect x="2321" y="766" width="1" height="117" fill="#98B0CC" />
<rect x="2482.1" y="766" width="1" height="117" fill="#98B0CC" />
<rect x="62" y="882" width="279" height="1" fill="#8CC9B2" />
<rect x="341" y="882" width="2189" height="1" fill="#98AFCB" />
<text x="81.50" y="831.70" font-family="Liberation Sans" font-size="19.5" font-weight="bold" fill="#000" text-anchor="start" >Item 4</text>
<text x="361.30" y="792.00" font-family="Liberation Sans" font-size="20.7" font-weight="normal" fill="#000" text-anchor="start" >YEAR PRIOR</text>
<text x="360.90" y="826.30" font-family="Liberation Sans" font-size="20.7" font-weight="normal" fill="#000" text-anchor="start" >SALES GOAL</text>
<text x="361.80" y="867.20" font-family="Liberation Sans" font-size="20.7" font-weight="bold" fill="#000" text-anchor="start" >% OF CHANGE</text>
<text x="692.10" y="791.10" font-family="Liberation Sans" font-size="19.3" font-weight="normal" fill="#000" text-anchor="end" >$20.00</text>
<text x="692.10" y="825.20" font-family="Liberation Sans" font-size="19.3" font-weight="normal" fill="#000" text-anchor="end" >$40.00</text>
<text x="692.10" y="866.90" font-family="Liberation Sans" font-size="19.2" font-weight="bold" fill="#000" text-anchor="end" >100%</text>
<text x="853.20" y="791.10" font-family="Liberation Sans" font-size="19.3" font-weight="normal" fill="#000" text-anchor="end" >$0.00</text>
<text x="853.20" y="825.20" font-family="Liberation Sans" font-size="19.3" font-weight="normal" fill="#000" text-anchor="end" >$0.00</text>
<text x="853.20" y="866.90" font-family="Liberation Sans" font-size="19.2" font-weight="bold" fill="#000" text-anchor="end" >#DIV/0!</text>
<text x="1014.30" y="791.10" font-family="Liberation Sans" font-size="19.3" font-weight="normal" fill="#000" text-anchor="end" >$0.00</text>
<text x="1014.30" y="825.20" font-family="Liberation Sans" font-size="19.3" font-weight="normal" fill="#000" text-anchor="end" >$0.00</text>
<text x="1014.30" y="866.90" font-family="Liberation Sans" font-size="19.2" font-weight="bold" fill="#000" text-anchor="end" >#DIV/0!</text>
<text x="1175.40" y="791.10" font-family="Liberation Sans" font-size="19.3" font-weight="normal" fill="#000" text-anchor="end" >$0.00</text>
<text x="1175.40" y="825.20" font-family="Liberation Sans" font-size="19.3" font-weight="normal" fill="#000" text-anchor="end" >$0.00</text>
<text x="1175.40" y="866.90" font-family="Liberation Sans" font-size="19.2" font-weight="bold" fill="#000" text-anchor="end" >#DIV/0!</text>
<text x="1336.50" y="791.10" font-family="Liberation Sans" font-size="19.3" font-weight="normal" fill="#000" text-anchor="end" >$0.00</text>
<text x="1336.50" y="825.20" font-family="Liberation Sans" font-size="19.3" font-weight="normal" fill="#000" text-anchor="end" >$0.00</text>
<text x="1336.50" y="866.90" font-family="Liberation Sans" font-size="19.2" font-weight="bold" fill="#000" text-anchor="end" >#DIV/0!</text>
<text x="1497.60" y="791.10" font-family="Liberation Sans" font-size="19.3" font-weight="normal" fill="#000" text-anchor="end" >$0.00</text>
<text x="1497.60" y="825.20" font-family="Liberation Sans" font-size="19.3" font-weight="normal" fill="#000" text-anchor="end" >$0.00</text>
<text x="1497.60" y="866.90" font-family="Liberation Sans" font-size="19.2" font-weight="bold" fill="#000" text-anchor="end" >#DIV/0!</text>
<text x="1658.70" y="791.10" font-family="Liberation Sans" font-size="19.3" font-weight="normal" fill="#000" text-anchor="end" >$0.00</text>
<text x="1658.70" y="825.20" font-family="Liberation Sans" font-size="19.3" font-weight="normal" fill="#000" text-anchor="end" >$0.00</text>
<text x="1658.70" y="866.90" font-family="Liberation Sans" font-size="19.2" font-weight="bold" fill="#000" text-anchor="end" >#DIV/0!</text>
<text x="1819.80" y="791.10" font-family="Liberation Sans" font-size="19.3" font-weight="normal" fill="#000" text-anchor="end" >$0.00</text>
<text x="1819.80" y="825.20" font-family="Liberation Sans" font-size="19.3" font-weight="normal" fill="#000" text-anchor="end" >$0.00</text>
<text x="1819.80" y="866.90" font-family="Liberation Sans" font-size="19.2" font-weight="bold" fill="#000" text-anchor="end" >#DIV/0!</text>
<text x="1980.90" y="791.10" font-family="Liberation Sans" font-size="19.3" font-weight="normal" fill="#000" text-anchor="end" >$0.00</text>
<text x="1980.90" y="825.20" font-family="Liberation Sans" font-size="19.3" font-weight="normal" fill="#000" text-anchor="end" >$0.00</text>
<text x="1980.90" y="866.90" font-family="Liberation Sans" font-size="19.2" font-weight="bold" fill="#000" text-anchor="end" >#DIV/0!</text>
<text x="2142.00" y="791.10" font-family="Liberation Sans" font-size="19.3" font-weight="normal" fill="#000" text-anchor="end" >$0.00</text>
<text x="2142.00" y="825.20" font-family="Liberation Sans" font-size="19.3" font-weight="normal" fill="#000" text-anchor="end" >$0.00</text>
<text x="2142.00" y="866.90" font-family="Liberation Sans" font-size="19.2" font-weight="bold" fill="#000" text-anchor="end" >#DIV/0!</text>
<text x="2303.10" y="791.10" font-family="Liberation Sans" font-size="19.3" font-weight="normal" fill="#000" text-anchor="end" >$0.00</text>
<text x="2303.10" y="825.20" font-family="Liberation Sans" font-size="19.3" font-weight="normal" fill="#000" text-anchor="end" >$0.00</text>
<text x="2303.10" y="866.90" font-family="Liberation Sans" font-size="19.2" font-weight="bold" fill="#000" text-anchor="end" >#DIV/0!</text>
<text x="2464.20" y="791.10" font-family="Liberation Sans" font-size="19.3" font-weight="normal" fill="#000" text-anchor="end" >$0.00</text>
<text x="2464.20" y="825.20" font-family="Liberation Sans" font-size="19.3" font-weight="normal" fill="#000" text-anchor="end" >$0.00</text>
<text x="2464.20" y="866.90" font-family="Liberation Sans" font-size="19.2" font-weight="bold" fill="#000" text-anchor="end" >#DIV/0!</text>
<path d="M1355 836 L1365 836 L1355 846 Z" fill="#008A00"/>
<path d="M2483 836 L2493 836 L2483 846 Z" fill="#008A00"/>
<rect x="63" y="883" width="278" height="116" fill="#F2F2F2" />
<rect x="341" y="917" width="2189" height="1" fill="#A2B8D2" />
<rect x="341" y="951" width="2189" height="1" fill="#A2B8D2" />
<rect x="62" y="882" width="1" height="117" fill="#8CC9B2" />
<rect x="341" y="882" width="1" height="117" fill="#A6D6C4" />
<rect x="548.9" y="882" width="1" height="117" fill="#98B0CC" />
<rect x="710" y="882" width="1" height="117" fill="#98B0CC" />
<rect x="871.1" y="882" width="1" height="117" fill="#98B0CC" />
<rect x="1032.2" y="882" width="1" height="117" fill="#98B0CC" />
<rect x="1193.3" y="882" width="1" height="117" fill="#98B0CC" />
<rect x="1354.4" y="882" width="1" height="117" fill="#98B0CC" />
<rect x="1515.5" y="882" width="1" height="117" fill="#98B0CC" />
<rect x="1676.6" y="882" width="1" height="117" fill="#98B0CC" />
<rect x="1837.7" y="882" width="1" height="117" fill="#98B0CC" />
<rect x="1998.8" y="882" width="1" height="117" fill="#98B0CC" />
<rect x="2159.9" y="882" width="1" height="117" fill="#98B0CC" />
<rect x="2321" y="882" width="1" height="117" fill="#98B0CC" />
<rect x="2482.1" y="882" width="1" height="117" fill="#98B0CC" />
<rect x="62" y="998" width="279" height="1" fill="#8CC9B2" />
<rect x="341" y="998" width="2189" height="1" fill="#98AFCB" />
<text x="81.50" y="947.60" font-family="Liberation Sans" font-size="19.5" font-weight="bold" fill="#000" text-anchor="start" >Item 5</text>
<text x="361.30" y="907.90" font-family="Liberation Sans" font-size="20.7" font-weight="normal" fill="#000" text-anchor="start" >YEAR PRIOR</text>
<text x="360.90" y="942.20" font-family="Liberation Sans" font-size="20.7" font-weight="normal" fill="#000" text-anchor="start" >SALES GOAL</text>
<text x="361.80" y="983.10" font-family="Liberation Sans" font-size="20.7" font-weight="bold" fill="#000" text-anchor="start" >% OF CHANGE</text>
<text x="692.10" y="907.00" font-family="Liberation Sans" font-size="19.3" font-weight="normal" fill="#000" text-anchor="end" >$0.00</text>
<text x="692.10" y="941.10" font-family="Liberation Sans" font-size="19.3" font-weight="normal" fill="#000" text-anchor="end" >$0.00</text>
<text x="692.10" y="982.80" font-family="Liberation Sans" font-size="19.2" font-weight="bold" fill="#000" text-anchor="end" >#DIV/0!</text>
<text x="853.20" y="907.00" font-family="Liberation Sans" font-size="19.3" font-weight="normal" fill="#000" text-anchor="end" >$0.00</text>
<text x="853.20" y="941.10" font-family="Liberation Sans" font-size="19.3" font-weight="normal" fill="#000" text-anchor="end" >$0.00</text>
<text x="853.20" y="982.80" font-family="Liberation Sans" font-size="19.2" font-weight="bold" fill="#000" text-anchor="end" >#DIV/0!</text>
<text x="1014.30" y="907.00" font-family="Liberation Sans" font-size="19.3" font-weight="normal" fill="#000" text-anchor="end" >$0.00</text>
<text x="1014.30" y="941.10" font-family="Liberation Sans" font-size="19.3" font-weight="normal" fill="#000" text-anchor="end" >$0.00</text>
<text x="1014.30" y="982.80" font-family="Liberation Sans" font-size="19.2" font-weight="bold" fill="#000" text-anchor="end" >#DIV/0!</text>
<text x="1175.40" y="907.00" font-family="Liberation Sans" font-size="19.3" font-weight="normal" fill="#000" text-anchor="end" >$0.00</text>
<text x="1175.40" y="941.10" font-family="Liberation Sans" font-size="19.3" font-weight="normal" fill="#000" text-anchor="end" >$0.00</text>
<text x="1175.40" y="982.80" font-family="Liberation Sans" font-size="19.2" font-weight="bold" fill="#000" text-anchor="end" >#DIV/0!</text>
<text x="1336.50" y="907.00" font-family="Liberation Sans" font-size="19.3" font-weight="normal" fill="#000" text-anchor="end" >$0.00</text>
<text x="1336.50" y="941.10" font-family="Liberation Sans" font-size="19.3" font-weight="normal" fill="#000" text-anchor="end" >$0.00</text>
<text x="1336.50" y="982.80" font-family="Liberation Sans" font-size="19.2" font-weight="bold" fill="#000" text-anchor="end" >#DIV/0!</text>
<text x="1497.60" y="907.00" font-family="Liberation Sans" font-size="19.3" font-weight="normal" fill="#000" text-anchor="end" >$0.00</text>
<text x="1497.60" y="941.10" font-family="Liberation Sans" font-size="19.3" font-weight="normal" fill="#000" text-anchor="end" >$0.00</text>
<text x="1497.60" y="982.80" font-family="Liberation Sans" font-size="19.2" font-weight="bold" fill="#000" text-anchor="end" >#DIV/0!</text>
<text x="1658.70" y="907.00" font-family="Liberation Sans" font-size="19.3" font-weight="normal" fill="#000" text-anchor="end" >$0.00</text>
<text x="1658.70" y="941.10" font-family="Liberation Sans" font-size="19.3" font-weight="normal" fill="#000" text-anchor="end" >$0.00</text>
<text x="1658.70" y="982.80" font-family="Liberation Sans" font-size="19.2" font-weight="bold" fill="#000" text-anchor="end" >#DIV/0!</text>
<text x="1819.80" y="907.00" font-family="Liberation Sans" font-size="19.3" font-weight="normal" fill="#000" text-anchor="end" >$0.00</text>
<text x="1819.80" y="941.10" font-family="Liberation Sans" font-size="19.3" font-weight="normal" fill="#000" text-anchor="end" >$0.00</text>
<text x="1819.80" y="982.80" font-family="Liberation Sans" font-size="19.2" font-weight="bold" fill="#000" text-anchor="end" >#DIV/0!</text>
<text x="1980.90" y="907.00" font-family="Liberation Sans" font-size="19.3" font-weight="normal" fill="#000" text-anchor="end" >$0.00</text>
<text x="1980.90" y="941.10" font-family="Liberation Sans" font-size="19.3" font-weight="normal" fill="#000" text-anchor="end" >$0.00</text>
<text x="1980.90" y="982.80" font-family="Liberation Sans" font-size="19.2" font-weight="bold" fill="#000" text-anchor="end" >#DIV/0!</text>
<text x="2142.00" y="907.00" font-family="Liberation Sans" font-size="19.3" font-weight="normal" fill="#000" text-anchor="end" >$0.00</text>
<text x="2142.00" y="941.10" font-family="Liberation Sans" font-size="19.3" font-weight="normal" fill="#000" text-anchor="end" >$0.00</text>
<text x="2142.00" y="982.80" font-family="Liberation Sans" font-size="19.2" font-weight="bold" fill="#000" text-anchor="end" >#DIV/0!</text>
<text x="2303.10" y="907.00" font-family="Liberation Sans" font-size="19.3" font-weight="normal" fill="#000" text-anchor="end" >$0.00</text>
<text x="2303.10" y="941.10" font-family="Liberation Sans" font-size="19.3" font-weight="normal" fill="#000" text-anchor="end" >$0.00</text>
<text x="2303.10" y="982.80" font-family="Liberation Sans" font-size="19.2" font-weight="bold" fill="#000" text-anchor="end" >#DIV/0!</text>
<text x="2464.20" y="907.00" font-family="Liberation Sans" font-size="19.3" font-weight="normal" fill="#000" text-anchor="end" >$0.00</text>
<text x="2464.20" y="941.10" font-family="Liberation Sans" font-size="19.3" font-weight="normal" fill="#000" text-anchor="end" >$0.00</text>
<text x="2464.20" y="982.80" font-family="Liberation Sans" font-size="19.2" font-weight="bold" fill="#000" text-anchor="end" >#DIV/0!</text>
<path d="M1355 952 L1365 952 L1355 962 Z" fill="#008A00"/>
<path d="M2483 952 L2493 952 L2483 962 Z" fill="#008A00"/>
<rect x="63" y="999" width="278" height="116" fill="#F2F2F2" />
<rect x="341" y="1033" width="2189" height="1" fill="#A2B8D2" />
<rect x="341" y="1067" width="2189" height="1" fill="#A2B8D2" />
<rect x="62" y="998" width="1" height="117" fill="#8CC9B2" />
<rect x="341" y="998" width="1" height="117" fill="#A6D6C4" />
<rect x="548.9" y="998" width="1" height="117" fill="#98B0CC" />
<rect x="710" y="998" width="1" height="117" fill="#98B0CC" />
<rect x="871.1" y="998" width="1" height="117" fill="#98B0CC" />
<rect x="1032.2" y="998" width="1" height="117" fill="#98B0CC" />
<rect x="1193.3" y="998" width="1" height="117" fill="#98B0CC" />
<rect x="1354.4" y="998" width="1" height="117" fill="#98B0CC" />
<rect x="1515.5" y="998" width="1" height="117" fill="#98B0CC" />
<rect x="1676.6" y="998" width="1" height="117" fill="#98B0CC" />
<rect x="1837.7" y="998" width="1" height="117" fill="#98B0CC" />
<rect x="1998.8" y="998" width="1" height="117" fill="#98B0CC" />
<rect x="2159.9" y="998" width="1" height="117" fill="#98B0CC" />
<rect x="2321" y="998" width="1" height="117" fill="#98B0CC" />
<rect x="2482.1" y="998" width="1" height="117" fill="#98B0CC" />
<rect x="62" y="1115" width="2468" height="14" fill="#808080" />
<rect x="62" y="1114" width="279" height="1" fill="#74AA91" />
<rect x="341" y="1114" width="2189" height="1" fill="#7E9BBE" />
<rect x="62" y="1129" width="279" height="1" fill="#74AA91" />
<rect x="341" y="1129" width="208" height="1" fill="#7FB4A0" />
<rect x="549" y="1129" width="1981" height="1" fill="#7E9BBE" />
<text x="81.50" y="1063.50" font-family="Liberation Sans" font-size="19.5" font-weight="bold" fill="#000" text-anchor="start" >Item 6</text>
<text x="361.30" y="1023.80" font-family="Liberation Sans" font-size="20.7" font-weight="normal" fill="#000" text-anchor="start" >YEAR PRIOR</text>
<text x="360.90" y="1058.10" font-family="Liberation Sans" font-size="20.7" font-weight="normal" fill="#000" text-anchor="start" >SALES GOAL</text>
<text x="361.80" y="1099.00" font-family="Liberation Sans" font-size="20.7" font-weight="bold" fill="#000" text-anchor="start" >% OF CHANGE</text>
<text x="692.10" y="1022.90" font-family="Liberation Sans" font-size="19.3" font-weight="normal" fill="#000" text-anchor="end" >$0.00</text>
<text x="692.10" y="1057.00" font-family="Liberation Sans" font-size="19.3" font-weight="normal" fill="#000" text-anchor="end" >$0.00</text>
<text x="692.10" y="1098.70" font-family="Liberation Sans" font-size="19.2" font-weight="bold" fill="#000" text-anchor="end" >#DIV/0!</text>
<text x="853.20" y="1022.90" font-family="Liberation Sans" font-size="19.3" font-weight="normal" fill="#000" text-anchor="end" >$0.00</text>
<text x="853.20" y="1057.00" font-family="Liberation Sans" font-size="19.3" font-weight="normal" fill="#000" text-anchor="end" >$0.00</text>
<text x="853.20" y="1098.70" font-family="Liberation Sans" font-size="19.2" font-weight="bold" fill="#000" text-anchor="end" >#DIV/0!</text>
<text x="1014.30" y="1022.90" font-family="Liberation Sans" font-size="19.3" font-weight="normal" fill="#000" text-anchor="end" >$0.00</text>
<text x="1014.30" y="1057.00" font-family="Liberation Sans" font-size="19.3" font-weight="normal" fill="#000" text-anchor="end" >$0.00</text>
<text x="1014.30" y="1098.70" font-family="Liberation Sans" font-size="19.2" font-weight="bold" fill="#000" text-anchor="end" >#DIV/0!</text>
<text x="1175.40" y="1022.90" font-family="Liberation Sans" font-size="19.3" font-weight="normal" fill="#000" text-anchor="end" >$0.00</text>
<text x="1175.40" y="1057.00" font-family="Liberation Sans" font-size="19.3" font-weight="normal" fill="#000" text-anchor="end" >$0.00</text>
<text x="1175.40" y="1098.70" font-family="Liberation Sans" font-size="19.2" font-weight="bold" fill="#000" text-anchor="end" >#DIV/0!</text>
<text x="1336.50" y="1022.90" font-family="Liberation Sans" font-size="19.3" font-weight="normal" fill="#000" text-anchor="end" >$0.00</text>
<text x="1336.50" y="1057.00" font-family="Liberation Sans" font-size="19.3" font-weight="normal" fill="#000" text-anchor="end" >$0.00</text>
<text x="1336.50" y="1098.70" font-family="Liberation Sans" font-size="19.2" font-weight="bold" fill="#000" text-anchor="end" >#DIV/0!</text>
<text x="1497.60" y="1022.90" font-family="Liberation Sans" font-size="19.3" font-weight="normal" fill="#000" text-anchor="end" >$0.00</text>
<text x="1497.60" y="1057.00" font-family="Liberation Sans" font-size="19.3" font-weight="normal" fill="#000" text-anchor="end" >$0.00</text>
<text x="1497.60" y="1098.70" font-family="Liberation Sans" font-size="19.2" font-weight="bold" fill="#000" text-anchor="end" >#DIV/0!</text>
<text x="1658.70" y="1022.90" font-family="Liberation Sans" font-size="19.3" font-weight="normal" fill="#000" text-anchor="end" >$0.00</text>
<text x="1658.70" y="1057.00" font-family="Liberation Sans" font-size="19.3" font-weight="normal" fill="#000" text-anchor="end" >$0.00</text>
<text x="1658.70" y="1098.70" font-family="Liberation Sans" font-size="19.2" font-weight="bold" fill="#000" text-anchor="end" >#DIV/0!</text>
<text x="1819.80" y="1022.90" font-family="Liberation Sans" font-size="19.3" font-weight="normal" fill="#000" text-anchor="end" >$0.00</text>
<text x="1819.80" y="1057.00" font-family="Liberation Sans" font-size="19.3" font-weight="normal" fill="#000" text-anchor="end" >$0.00</text>
<text x="1819.80" y="1098.70" font-family="Liberation Sans" font-size="19.2" font-weight="bold" fill="#000" text-anchor="end" >#DIV/0!</text>
<text x="1980.90" y="1022.90" font-family="Liberation Sans" font-size="19.3" font-weight="normal" fill="#000" text-anchor="end" >$0.00</text>
<text x="1980.90" y="1057.00" font-family="Liberation Sans" font-size="19.3" font-weight="normal" fill="#000" text-anchor="end" >$0.00</text>
<text x="1980.90" y="1098.70" font-family="Liberation Sans" font-size="19.2" font-weight="bold" fill="#000" text-anchor="end" >#DIV/0!</text>
<text x="2142.00" y="1022.90" font-family="Liberation Sans" font-size="19.3" font-weight="normal" fill="#000" text-anchor="end" >$0.00</text>
<text x="2142.00" y="1057.00" font-family="Liberation Sans" font-size="19.3" font-weight="normal" fill="#000" text-anchor="end" >$0.00</text>
<text x="2142.00" y="1098.70" font-family="Liberation Sans" font-size="19.2" font-weight="bold" fill="#000" text-anchor="end" >#DIV/0!</text>
<text x="2303.10" y="1022.90" font-family="Liberation Sans" font-size="19.3" font-weight="normal" fill="#000" text-anchor="end" >$0.00</text>
<text x="2303.10" y="1057.00" font-family="Liberation Sans" font-size="19.3" font-weight="normal" fill="#000" text-anchor="end" >$0.00</text>
<text x="2303.10" y="1098.70" font-family="Liberation Sans" font-size="19.2" font-weight="bold" fill="#000" text-anchor="end" >#DIV/0!</text>
<text x="2464.20" y="1022.90" font-family="Liberation Sans" font-size="19.3" font-weight="normal" fill="#000" text-anchor="end" >$0.00</text>
<text x="2464.20" y="1057.00" font-family="Liberation Sans" font-size="19.3" font-weight="normal" fill="#000" text-anchor="end" >$0.00</text>
<text x="2464.20" y="1098.70" font-family="Liberation Sans" font-size="19.2" font-weight="bold" fill="#000" text-anchor="end" >#DIV/0!</text>
<path d="M1355 1068 L1365 1068 L1355 1078 Z" fill="#008A00"/>
<path d="M2483 1068 L2493 1068 L2483 1078 Z" fill="#008A00"/>
<rect x="63" y="1130" width="278" height="115" fill="#F2F2F2" />
<rect x="341" y="1164" width="2189" height="1" fill="#A2B8D2" />
<rect x="341" y="1198" width="2189" height="1" fill="#A2B8D2" />
<rect x="62" y="1129" width="1" height="116" fill="#8CC9B2" />
<rect x="341" y="1129" width="1" height="116" fill="#A6D6C4" />
<rect x="548.9" y="1129" width="1" height="116" fill="#98B0CC" />
<rect x="710" y="1129" width="1" height="116" fill="#98B0CC" />
<rect x="871.1" y="1129" width="1" height="116" fill="#98B0CC" />
<rect x="1032.2" y="1129" width="1" height="116" fill="#98B0CC" />
<rect x="1193.3" y="1129" width="1" height="116" fill="#98B0CC" />
<rect x="1354.4" y="1129" width="1" height="116" fill="#98B0CC" />
<rect x="1515.5" y="1129" width="1" height="116" fill="#98B0CC" />
<rect x="1676.6" y="1129" width="1" height="116" fill="#98B0CC" />
<rect x="1837.7" y="1129" width="1" height="116" fill="#98B0CC" />
<rect x="1998.8" y="1129" width="1" height="116" fill="#98B0CC" />
<rect x="2159.9" y="1129" width="1" height="116" fill="#98B0CC" />
<rect x="2321" y="1129" width="1" height="116" fill="#98B0CC" />
<rect x="2482.1" y="1129" width="1" height="116" fill="#98B0CC" />
<rect x="62" y="1245" width="2468" height="15" fill="#808080" />
<rect x="62" y="1244" width="279" height="1" fill="#74AA91" />
<rect x="341" y="1244" width="2189" height="1" fill="#7E9BBE" />
<rect x="62" y="1260" width="279" height="1" fill="#74AA91" />
<rect x="341" y="1260" width="208" height="1" fill="#7FB4A0" />
<rect x="549" y="1260" width="1981" height="1" fill="#7E9BBE" />
<text x="81.50" y="1194.20" font-family="Liberation Sans" font-size="19.5" font-weight="bold" fill="#000" text-anchor="start" >Item 7</text>
<text x="361.30" y="1154.50" font-family="Liberation Sans" font-size="20.7" font-weight="normal" fill="#000" text-anchor="start" >YEAR PRIOR</text>
<text x="360.90" y="1188.80" font-family="Liberation Sans" font-size="20.7" font-weight="normal" fill="#000" text-anchor="start" >SALES GOAL</text>
<text x="361.80" y="1229.70" font-family="Liberation Sans" font-size="20.7" font-weight="bold" fill="#000" text-anchor="start" >% OF CHANGE</text>
<text x="692.10" y="1153.60" font-family="Liberation Sans" font-size="19.3" font-weight="normal" fill="#000" text-anchor="end" >$0.00</text>
<text x="692.10" y="1187.70" font-family="Liberation Sans" font-size="19.3" font-weight="normal" fill="#000" text-anchor="end" >$0.00</text>
<text x="692.10" y="1229.40" font-family="Liberation Sans" font-size="19.2" font-weight="bold" fill="#000" text-anchor="end" >#DIV/0!</text>
<text x="853.20" y="1153.60" font-family="Liberation Sans" font-size="19.3" font-weight="normal" fill="#000" text-anchor="end" >$0.00</text>
<text x="853.20" y="1187.70" font-family="Liberation Sans" font-size="19.3" font-weight="normal" fill="#000" text-anchor="end" >$0.00</text>
<text x="853.20" y="1229.40" font-family="Liberation Sans" font-size="19.2" font-weight="bold" fill="#000" text-anchor="end" >#DIV/0!</text>
<text x="1014.30" y="1153.60" font-family="Liberation Sans" font-size="19.3" font-weight="normal" fill="#000" text-anchor="end" >$0.00</text>
<text x="1014.30" y="1187.70" font-family="Liberation Sans" font-size="19.3" font-weight="normal" fill="#000" text-anchor="end" >$0.00</text>
<text x="1014.30" y="1229.40" font-family="Liberation Sans" font-size="19.2" font-weight="bold" fill="#000" text-anchor="end" >#DIV/0!</text>
<text x="1175.40" y="1153.60" font-family="Liberation Sans" font-size="19.3" font-weight="normal" fill="#000" text-anchor="end" >$0.00</text>
<text x="1175.40" y="1187.70" font-family="Liberation Sans" font-size="19.3" font-weight="normal" fill="#000" text-anchor="end" >$0.00</text>
<text x="1175.40" y="1229.40" font-family="Liberation Sans" font-size="19.2" font-weight="bold" fill="#000" text-anchor="end" >#DIV/0!</text>
<text x="1336.50" y="1153.60" font-family="Liberation Sans" font-size="19.3" font-weight="normal" fill="#000" text-anchor="end" >$0.00</text>
<text x="1336.50" y="1187.70" font-family="Liberation Sans" font-size="19.3" font-weight="normal" fill="#000" text-anchor="end" >$0.00</text>
<text x="1336.50" y="1229.40" font-family="Liberation Sans" font-size="19.2" font-weight="bold" fill="#000" text-anchor="end" >#DIV/0!</text>
<text x="1497.60" y="1153.60" font-family="Liberation Sans" font-size="19.3" font-weight="normal" fill="#000" text-anchor="end" >$0.00</text>
<text x="1497.60" y="1187.70" font-family="Liberation Sans" font-size="19.3" font-weight="normal" fill="#000" text-anchor="end" >$0.00</text>
<text x="1497.60" y="1229.40" font-family="Liberation Sans" font-size="19.2" font-weight="bold" fill="#000" text-anchor="end" >#DIV/0!</text>
<text x="1658.70" y="1153.60" font-family="Liberation Sans" font-size="19.3" font-weight="normal" fill="#000" text-anchor="end" >$0.00</text>
<text x="1658.70" y="1187.70" font-family="Liberation Sans" font-size="19.3" font-weight="normal" fill="#000" text-anchor="end" >$0.00</text>
<text x="1658.70" y="1229.40" font-family="Liberation Sans" font-size="19.2" font-weight="bold" fill="#000" text-anchor="end" >#DIV/0!</text>
<text x="1819.80" y="1153.60" font-family="Liberation Sans" font-size="19.3" font-weight="normal" fill="#000" text-anchor="end" >$0.00</text>
<text x="1819.80" y="1187.70" font-family="Liberation Sans" font-size="19.3" font-weight="normal" fill="#000" text-anchor="end" >$0.00</text>
<text x="1819.80" y="1229.40" font-family="Liberation Sans" font-size="19.2" font-weight="bold" fill="#000" text-anchor="end" >#DIV/0!</text>
<text x="1980.90" y="1153.60" font-family="Liberation Sans" font-size="19.3" font-weight="normal" fill="#000" text-anchor="end" >$0.00</text>
<text x="1980.90" y="1187.70" font-family="Liberation Sans" font-size="19.3" font-weight="normal" fill="#000" text-anchor="end" >$0.00</text>
<text x="1980.90" y="1229.40" font-family="Liberation Sans" font-size="19.2" font-weight="bold" fill="#000" text-anchor="end" >#DIV/0!</text>
<text x="2142.00" y="1153.60" font-family="Liberation Sans" font-size="19.3" font-weight="normal" fill="#000" text-anchor="end" >$0.00</text>
<text x="2142.00" y="1187.70" font-family="Liberation Sans" font-size="19.3" font-weight="normal" fill="#000" text-anchor="end" >$0.00</text>
<text x="2142.00" y="1229.40" font-family="Liberation Sans" font-size="19.2" font-weight="bold" fill="#000" text-anchor="end" >#DIV/0!</text>
<text x="2303.10" y="1153.60" font-family="Liberation Sans" font-size="19.3" font-weight="normal" fill="#000" text-anchor="end" >$0.00</text>
<text x="2303.10" y="1187.70" font-family="Liberation Sans" font-size="19.3" font-weight="normal" fill="#000" text-anchor="end" >$0.00</text>
<text x="2303.10" y="1229.40" font-family="Liberation Sans" font-size="19.2" font-weight="bold" fill="#000" text-anchor="end" >#DIV/0!</text>
<text x="2464.20" y="1153.60" font-family="Liberation Sans" font-size="19.3" font-weight="normal" fill="#000" text-anchor="end" >$0.00</text>
<text x="2464.20" y="1187.70" font-family="Liberation Sans" font-size="19.3" font-weight="normal" fill="#000" text-anchor="end" >$0.00</text>
<text x="2464.20" y="1229.40" font-family="Liberation Sans" font-size="19.2" font-weight="bold" fill="#000" text-anchor="end" >#DIV/0!</text>
<path d="M1355 1199 L1365 1199 L1355 1209 Z" fill="#008A00"/>
<path d="M2483 1199 L2493 1199 L2483 1209 Z" fill="#008A00"/>
<rect x="63" y="1261" width="278" height="115" fill="#F2F2F2" />
<rect x="341" y="1295" width="2189" height="1" fill="#A2B8D2" />
<rect x="341" y="1329" width="2189" height="1" fill="#A2B8D2" />
<rect x="62" y="1260" width="1" height="116" fill="#8CC9B2" />
<rect x="341" y="1260" width="1" height="116" fill="#A6D6C4" />
<rect x="548.9" y="1260" width="1" height="116" fill="#98B0CC" />
<rect x="710" y="1260" width="1" height="116" fill="#98B0CC" />
<rect x="871.1" y="1260" width="1" height="116" fill="#98B0CC" />
<rect x="1032.2" y="1260" width="1" height="116" fill="#98B0CC" />
<rect x="1193.3" y="1260" width="1" height="116" fill="#98B0CC" />
<rect x="1354.4" y="1260" width="1" height="116" fill="#98B0CC" />
<rect x="1515.5" y="1260" width="1" height="116" fill="#98B0CC" />
<rect x="1676.6" y="1260" width="1" height="116" fill="#98B0CC" />
<rect x="1837.7" y="1260" width="1" height="116" fill="#98B0CC" />
<rect x="1998.8" y="1260" width="1" height="116" fill="#98B0CC" />
<rect x="2159.9" y="1260" width="1" height="116" fill="#98B0CC" />
<rect x="2321" y="1260" width="1" height="116" fill="#98B0CC" />
<rect x="2482.1" y="1260" width="1" height="116" fill="#98B0CC" />
<rect x="62" y="1376" width="2468" height="15" fill="#808080" />
<rect x="62" y="1375" width="279" height="1" fill="#74AA91" />
<rect x="341" y="1375" width="2189" height="1" fill="#7E9BBE" />
<rect x="62" y="1391" width="279" height="1" fill="#74AA91" />
<rect x="341" y="1391" width="208" height="1" fill="#7FB4A0" />
<rect x="549" y="1391" width="1981" height="1" fill="#7E9BBE" />
<text x="81.50" y="1325.20" font-family="Liberation Sans" font-size="19.5" font-weight="bold" fill="#000" text-anchor="start" >Item 8</text>
<text x="361.30" y="1285.50" font-family="Liberation Sans" font-size="20.7" font-weight="normal" fill="#000" text-anchor="start" >YEAR PRIOR</text>
<text x="360.90" y="1319.80" font-family="Liberation Sans" font-size="20.7" font-weight="normal" fill="#000" text-anchor="start" >SALES GOAL</text>
<text x="361.80" y="1360.70" font-family="Liberation Sans" font-size="20.7" font-weight="bold" fill="#000" text-anchor="start" >% OF CHANGE</text>
<text x="692.10" y="1284.60" font-family="Liberation Sans" font-size="19.3" font-weight="normal" fill="#000" text-anchor="end" >$0.00</text>
<text x="692.10" y="1318.70" font-family="Liberation Sans" font-size="19.3" font-weight="normal" fill="#000" text-anchor="end" >$0.00</text>
<text x="692.10" y="1360.40" font-family="Liberation Sans" font-size="19.2" font-weight="bold" fill="#000" text-anchor="end" >#DIV/0!</text>
<text x="853.20" y="1284.60" font-family="Liberation Sans" font-size="19.3" font-weight="normal" fill="#000" text-anchor="end" >$0.00</text>
<text x="853.20" y="1318.70" font-family="Liberation Sans" font-size="19.3" font-weight="normal" fill="#000" text-anchor="end" >$0.00</text>
<text x="853.20" y="1360.40" font-family="Liberation Sans" font-size="19.2" font-weight="bold" fill="#000" text-anchor="end" >#DIV/0!</text>
<text x="1014.30" y="1284.60" font-family="Liberation Sans" font-size="19.3" font-weight="normal" fill="#000" text-anchor="end" >$0.00</text>
<text x="1014.30" y="1318.70" font-family="Liberation Sans" font-size="19.3" font-weight="normal" fill="#000" text-anchor="end" >$0.00</text>
<text x="1014.30" y="1360.40" font-family="Liberation Sans" font-size="19.2" font-weight="bold" fill="#000" text-anchor="end" >#DIV/0!</text>
<text x="1175.40" y="1284.60" font-family="Liberation Sans" font-size="19.3" font-weight="normal" fill="#000" text-anchor="end" >$0.00</text>
<text x="1175.40" y="1318.70" font-family="Liberation Sans" font-size="19.3" font-weight="normal" fill="#000" text-anchor="end" >$0.00</text>
<text x="1175.40" y="1360.40" font-family="Liberation Sans" font-size="19.2" font-weight="bold" fill="#000" text-anchor="end" >#DIV/0!</text>
<text x="1336.50" y="1284.60" font-family="Liberation Sans" font-size="19.3" font-weight="normal" fill="#000" text-anchor="end" >$0.00</text>
<text x="1336.50" y="1318.70" font-family="Liberation Sans" font-size="19.3" font-weight="normal" fill="#000" text-anchor="end" >$0.00</text>
<text x="1336.50" y="1360.40" font-family="Liberation Sans" font-size="19.2" font-weight="bold" fill="#000" text-anchor="end" >#DIV/0!</text>
<text x="1497.60" y="1284.60" font-family="Liberation Sans" font-size="19.3" font-weight="normal" fill="#000" text-anchor="end" >$0.00</text>
<text x="1497.60" y="1318.70" font-family="Liberation Sans" font-size="19.3" font-weight="normal" fill="#000" text-anchor="end" >$0.00</text>
<text x="1497.60" y="1360.40" font-family="Liberation Sans" font-size="19.2" font-weight="bold" fill="#000" text-anchor="end" >#DIV/0!</text>
<text x="1658.70" y="1284.60" font-family="Liberation Sans" font-size="19.3" font-weight="normal" fill="#000" text-anchor="end" >$0.00</text>
<text x="1658.70" y="1318.70" font-family="Liberation Sans" font-size="19.3" font-weight="normal" fill="#000" text-anchor="end" >$0.00</text>
<text x="1658.70" y="1360.40" font-family="Liberation Sans" font-size="19.2" font-weight="bold" fill="#000" text-anchor="end" >#DIV/0!</text>
<text x="1819.80" y="1284.60" font-family="Liberation Sans" font-size="19.3" font-weight="normal" fill="#000" text-anchor="end" >$0.00</text>
<text x="1819.80" y="1318.70" font-family="Liberation Sans" font-size="19.3" font-weight="normal" fill="#000" text-anchor="end" >$0.00</text>
<text x="1819.80" y="1360.40" font-family="Liberation Sans" font-size="19.2" font-weight="bold" fill="#000" text-anchor="end" >#DIV/0!</text>
<text x="1980.90" y="1284.60" font-family="Liberation Sans" font-size="19.3" font-weight="normal" fill="#000" text-anchor="end" >$0.00</text>
<text x="1980.90" y="1318.70" font-family="Liberation Sans" font-size="19.3" font-weight="normal" fill="#000" text-anchor="end" >$0.00</text>
<text x="1980.90" y="1360.40" font-family="Liberation Sans" font-size="19.2" font-weight="bold" fill="#000" text-anchor="end" >#DIV/0!</text>
<text x="2142.00" y="1284.60" font-family="Liberation Sans" font-size="19.3" font-weight="normal" fill="#000" text-anchor="end" >$0.00</text>
<text x="2142.00" y="1318.70" font-family="Liberation Sans" font-size="19.3" font-weight="normal" fill="#000" text-anchor="end" >$0.00</text>
<text x="2142.00" y="1360.40" font-family="Liberation Sans" font-size="19.2" font-weight="bold" fill="#000" text-anchor="end" >#DIV/0!</text>
<text x="2303.10" y="1284.60" font-family="Liberation Sans" font-size="19.3" font-weight="normal" fill="#000" text-anchor="end" >$0.00</text>
<text x="2303.10" y="1318.70" font-family="Liberation Sans" font-size="19.3" font-weight="normal" fill="#000" text-anchor="end" >$0.00</text>
<text x="2303.10" y="1360.40" font-family="Liberation Sans" font-size="19.2" font-weight="bold" fill="#000" text-anchor="end" >#DIV/0!</text>
<text x="2464.20" y="1284.60" font-family="Liberation Sans" font-size="19.3" font-weight="normal" fill="#000" text-anchor="end" >$0.00</text>
<text x="2464.20" y="1318.70" font-family="Liberation Sans" font-size="19.3" font-weight="normal" fill="#000" text-anchor="end" >$0.00</text>
<text x="2464.20" y="1360.40" font-family="Liberation Sans" font-size="19.2" font-weight="bold" fill="#000" text-anchor="end" >#DIV/0!</text>
<path d="M1355 1330 L1365 1330 L1355 1340 Z" fill="#008A00"/>
<path d="M2483 1330 L2493 1330 L2483 1340 Z" fill="#008A00"/>
<rect x="63" y="1392" width="278" height="116" fill="#F2F2F2" />
<rect x="341" y="1426" width="2189" height="1" fill="#A2B8D2" />
<rect x="341" y="1460" width="2189" height="1" fill="#A2B8D2" />
<rect x="62" y="1391" width="1" height="117" fill="#8CC9B2" />
<rect x="341" y="1391" width="1" height="117" fill="#A6D6C4" />
<rect x="548.9" y="1391" width="1" height="117" fill="#98B0CC" />
<rect x="710" y="1391" width="1" height="117" fill="#98B0CC" />
<rect x="871.1" y="1391" width="1" height="117" fill="#98B0CC" />
<rect x="1032.2" y="1391" width="1" height="117" fill="#98B0CC" />
<rect x="1193.3" y="1391" width="1" height="117" fill="#98B0CC" />
<rect x="1354.4" y="1391" width="1" height="117" fill="#98B0CC" />
<rect x="1515.5" y="1391" width="1" height="117" fill="#98B0CC" />
<rect x="1676.6" y="1391" width="1" height="117" fill="#98B0CC" />
<rect x="1837.7" y="1391" width="1" height="117" fill="#98B0CC" />
<rect x="1998.8" y="1391" width="1" height="117" fill="#98B0CC" />
<rect x="2159.9" y="1391" width="1" height="117" fill="#98B0CC" />
<rect x="2321" y="1391" width="1" height="117" fill="#98B0CC" />
<rect x="2482.1" y="1391" width="1" height="117" fill="#98B0CC" />
<rect x="62" y="1508" width="2468" height="14" fill="#808080" />
<rect x="62" y="1507" width="279" height="1" fill="#74AA91" />
<rect x="341" y="1507" width="2189" height="1" fill="#7E9BBE" />
<rect x="62" y="1522" width="279" height="1" fill="#74AA91" />
<rect x="341" y="1522" width="208" height="1" fill="#7FB4A0" />
<rect x="549" y="1522" width="1981" height="1" fill="#7E9BBE" />
<text x="361.30" y="1415.50" font-family="Liberation Sans" font-size="20.7" font-weight="normal" fill="#000" text-anchor="start" >YEAR PRIOR</text>
<text x="691.50" y="1414.60" font-family="Liberation Sans" font-size="19.3" font-weight="normal" fill="#000" text-anchor="end" >$0.00</text>
<text x="852.60" y="1414.60" font-family="Liberation Sans" font-size="19.3" font-weight="normal" fill="#000" text-anchor="end" >$0.00</text>
<text x="1013.70" y="1414.60" font-family="Liberation Sans" font-size="19.3" font-weight="normal" fill="#000" text-anchor="end" >$0.00</text>
<text x="1174.80" y="1414.60" font-family="Liberation Sans" font-size="19.3" font-weight="normal" fill="#000" text-anchor="end" >$0.00</text>
<text x="1335.90" y="1414.60" font-family="Liberation Sans" font-size="19.3" font-weight="normal" fill="#000" text-anchor="end" >$0.00</text>
<text x="1497.00" y="1414.60" font-family="Liberation Sans" font-size="19.3" font-weight="normal" fill="#000" text-anchor="end" >$0.00</text>
<text x="1658.10" y="1414.60" font-family="Liberation Sans" font-size="19.3" font-weight="normal" fill="#000" text-anchor="end" >$0.00</text>
<text x="1819.20" y="1414.60" font-family="Liberation Sans" font-size="19.3" font-weight="normal" fill="#000" text-anchor="end" >$0.00</text>
<text x="1980.30" y="1414.60" font-family="Liberation Sans" font-size="19.3" font-weight="normal" fill="#000" text-anchor="end" >$0.00</text>
<text x="2141.40" y="1414.60" font-family="Liberation Sans" font-size="19.3" font-weight="normal" fill="#000" text-anchor="end" >$0.00</text>
<text x="2302.50" y="1414.60" font-family="Liberation Sans" font-size="19.3" font-weight="normal" fill="#000" text-anchor="end" >$0.00</text>
<text x="2463.60" y="1414.60" font-family="Liberation Sans" font-size="19.3" font-weight="normal" fill="#000" text-anchor="end" >$0.00</text>
</g>
<rect x="2530" y="222" width="1" height="1181" fill="#A0A0A0" />
<rect x="0" y="1403" width="2531" height="1" fill="#ABABAB" />
<rect x="2531" y="193" width="29" height="1211" fill="#E6E6E6" />
<rect x="2533.5" y="193.5" width="28" height="29" fill="#FFF" stroke="#C8C8C8"/>
<path d="M2540 212 L2554.5 212 L2547.25 204 Z" fill="#777"/>
<rect x="2533" y="222" width="27" height="1" fill="#ABABAB" />
<rect x="2533" y="223" width="27" height="207" fill="#FFFFFF" />
<rect x="2533" y="223" width="1" height="207" fill="#C8C8C8" />
<rect x="2533" y="430" width="27" height="946" fill="#DADADA" />
<rect x="2533.5" y="1375.5" width="28" height="28" fill="#FFF" stroke="#C8C8C8"/>
<path d="M2541 1387 L2553.5 1387 L2547.25 1393.5 Z" fill="#777"/>
<rect x="0" y="1404" width="2560" height="38" fill="#E6E6E6" />
<rect x="0" y="1404" width="28" height="38" fill="#DCDCDC" />
<path d="M37 1416 L37 1429 L29 1422.5 Z" fill="#C4C4C4"/>
<path d="M68 1415.5 L68 1429 L75.5 1422.3 Z" fill="#C4C4C4"/>
<rect x="130" y="1403" width="139" height="36" fill="#FFFFFF" />
<rect x="130" y="1403" width="1" height="36" fill="#ABABAB" />
<rect x="268" y="1403" width="1" height="36" fill="#ABABAB" />
<rect x="130" y="1437" width="139" height="2.5" fill="#217346" />
<text x="141.53" y="1428.60" font-family="Liberation Sans" font-size="24" font-weight="bold" fill="#217346" textLength="116.11" lengthAdjust="spacingAndGlyphs" >Sales Plan</text>
<circle cx="327.8" cy="1423.6" r="13.8" fill="none" stroke="#7A7A7A" stroke-width="1.8"/>
<path d="M321 1423.6 L334.6 1423.6 M327.8 1416.8 L327.8 1430.4" stroke="#7A7A7A" stroke-width="2.6"/>
<rect x="1282" y="1414" width="3.5" height="3.5" fill="#A0A0A0" />
<rect x="1282" y="1421.5" width="3.5" height="3.5" fill="#A0A0A0" />
<rect x="1282" y="1429" width="3.5" height="3.5" fill="#A0A0A0" />
<rect x="1305.5" y="1408.5" width="1226" height="29" fill="#DCDCDC" stroke="#C8C8C8"/>
<rect x="1305.5" y="1408.5" width="1001" height="29" fill="#FFF" stroke="#C8C8C8"/>
<rect x="1334" y="1408" width="1" height="30" fill="#B0B0B0" />
<path d="M1323 1416 L1323 1429 L1315 1422.5 Z" fill="#777"/>
<rect x="2502.5" y="1408.5" width="29" height="29" fill="#FFF" stroke="#C8C8C8"/>
<path d="M2512.5 1416.5 L2512.5 1429 L2520 1422.75 Z" fill="#777"/>
<rect x="0" y="1442" width="2560" height="40" fill="#F1F1F1" />
<rect x="0" y="1442" width="46" height="40" fill="#EBEBEB" />
<rect x="0" y="1442" width="2560" height="1" fill="#DADADA" />
<text x="4.69" y="1469.50" font-family="Liberation Sans" font-size="19.5" font-weight="normal" fill="#444" textLength="49.64" lengthAdjust="spacingAndGlyphs" >Ready</text>
<rect x="80" y="1453" width="21" height="19.8" fill="none" stroke="#555" stroke-width="1.4"/>
<rect x="82" y="1452.2" width="20" height="5.2" fill="#555" />
<circle cx="82.6" cy="1454.6" r="4.6" fill="#555"/>
<rect x="83" y="1461" width="4.3" height="1.1" fill="#666" />
<rect x="88.5" y="1461" width="4.3" height="1.1" fill="#666" />
<rect x="94" y="1461" width="4.3" height="1.1" fill="#666" />
<rect x="83" y="1463.9" width="4.3" height="1.1" fill="#666" />
<rect x="88.5" y="1463.9" width="4.3" height="1.1" fill="#666" />
<rect x="94" y="1463.9" width="4.3" height="1.1" fill="#666" />
<rect x="83" y="1466.6" width="4.3" height="1.1" fill="#666" />
<rect x="88.5" y="1466.6" width="4.3" height="1.1" fill="#666" />
<rect x="94" y="1466.6" width="4.3" height="1.1" fill="#666" />
<rect x="83" y="1469" width="4.3" height="1.1" fill="#666" />
<rect x="88.5" y="1469" width="4.3" height="1.1" fill="#666" />
<rect x="94" y="1469" width="4.3" height="1.1" fill="#666" />
<rect x="2139" y="1443" width="48" height="39" fill="#C6C6C6" />
<path d="M2151.5 1450.5 h22 v22 h-22 z M2151.5 1457.8 h22 M2151.5 1465.2 h22 M2158.8 1450.5 v22 M2166.2 1450.5 v22" fill="#BDBDBD" stroke="#777" stroke-width="1.2"/>
<rect x="2198.5" y="1451.5" width="23" height="21" fill="none" stroke="#777" stroke-width="1.2"/>
<rect x="2203.5" y="1454.5" width="13" height="15" fill="none" stroke="#777" stroke-width="1.2"/>
<rect x="2206" y="1458" width="8" height="1.2" fill="#777" />
<rect x="2206" y="1461" width="8" height="1.2" fill="#777" />
<rect x="2206" y="1464" width="8" height="1.2" fill="#777" />
<rect x="2206" y="1467" width="8" height="1.2" fill="#777" />
<rect x="2246.5" y="1451.5" width="23" height="21" fill="none" stroke="#777" stroke-width="1.2"/>
<path d="M2252.5 1451.5 v12 h8 v-12 M2246.5 1463.5 h6" fill="none" stroke="#777" stroke-width="1.2"/>
<rect x="2289.5" y="1460.5" width="11.3" height="3" fill="#666" />
<rect x="2309" y="1461.5" width="180" height="1.6" fill="#A8A8A8" />
<rect x="2375" y="1452" width="9" height="20" fill="#777" />
<rect x="2398.3" y="1458" width="1.3" height="8.5" fill="#A8A8A8" />
<rect x="2495.3" y="1460.5" width="14.7" height="3" fill="#666" />
<rect x="2501.2" y="1455" width="3" height="14.5" fill="#666" />
<text x="2522.22" y="1470.00" font-family="Liberation Sans" font-size="18.5" font-weight="normal" fill="#444" textLength="35.92" lengthAdjust="spacingAndGlyphs" >80%</text></svg>
</body></html>
